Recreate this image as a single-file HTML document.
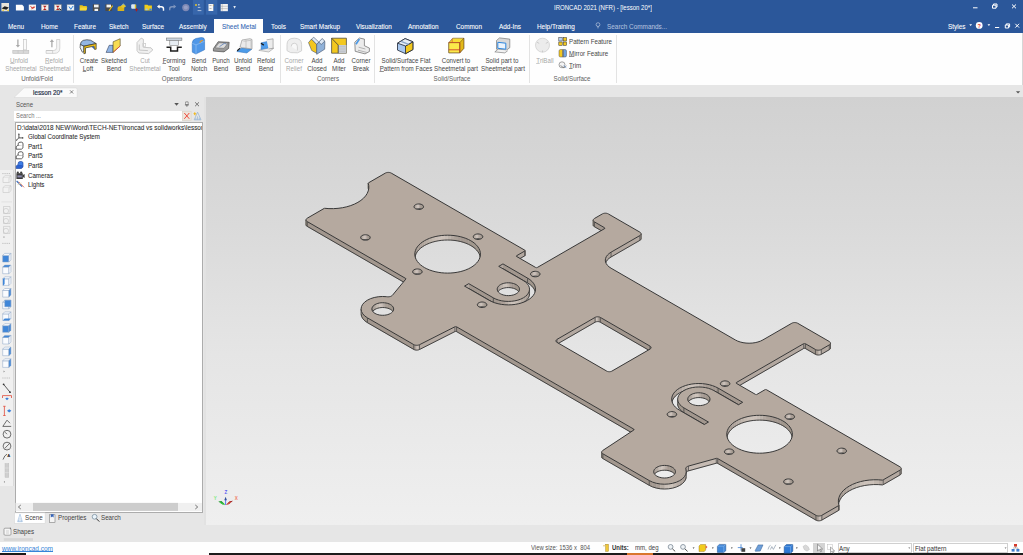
<!DOCTYPE html>
<html><head><meta charset="utf-8">
<style>
*{margin:0;padding:0;box-sizing:border-box}
html,body{width:1023px;height:555px;overflow:hidden;background:#e6e6e6;font-family:"Liberation Sans",sans-serif;font-size:6.2px;color:#444}
.a{position:absolute;white-space:nowrap;line-height:1}
svg{position:absolute;overflow:visible}
#top{position:absolute;left:0;top:0;width:1023px;height:33px;background:#2b579a}
.tab{position:absolute;top:22.7px;color:#fff;font-size:7.2px;line-height:1;white-space:nowrap;transform:scaleX(.89);transform-origin:0 0}
#ribbon{position:absolute;left:0;top:33px;width:1023px;height:52px;background:#fefefe;border-right:1px solid #d6d6d6}
.l{position:absolute;width:80px;text-align:center;font-size:7px;line-height:1;color:#474747;white-space:nowrap;transform:scaleX(.885)}
.d{color:#a8a8a8}
.g{position:absolute;width:80px;text-align:center;top:75.3px;font-size:7px;line-height:1;color:#606060;white-space:nowrap;transform:scaleX(.885)}
.sep{position:absolute;top:35px;width:1px;height:48px;background:#e3e3e3}
#doctabs{position:absolute;left:0;top:85px;width:1023px;height:12px;background:#e6e6e6}
#vp{position:absolute;left:206px;top:97px;width:817px;height:427.5px;background:linear-gradient(180deg,#d1d1d1 0%,#dadada 30%,#e5e5e5 60%,#efefef 100%)}
#status{position:absolute;left:0;top:542px;width:1023px;height:11px;background:#fefefe}
.tr{position:absolute;left:27.5px;font-size:7px;line-height:1;color:#2e2e2e;white-space:nowrap;transform:scaleX(.88);transform-origin:0 0}
u{text-decoration:none;background:linear-gradient(currentColor,currentColor) 0 93%/100% 0.6px no-repeat}
.tab,.tr{-webkit-text-stroke:0.08px currentColor}
</style></head><body>
<!-- ===== TOP BAR ===== -->
<div id="top"></div>
<svg style="left:0;top:0" width="240" height="16">
<!-- app icon -->
<rect x="1.4" y="3" width="7.6" height="8.3" fill="#e9e4da"/>
<path d="M1.6 8.5l3-2.2l4.3 1.2l-2.6 2.3z" fill="#1f1f1f"/>
<path d="M1.8 10.2l2-1.2v2.2z" fill="#e8c830"/>
<path d="M6.6 10.4l2.3-1v1.8z" fill="#e8c830"/>
<!-- new -->
<path d="M15.9 4.8h6.3l1.7 1.6v4.1h-8z" fill="#fdfdfd"/>
<!-- 3 -->
<rect x="28.8" y="4.6" width="7.2" height="5.8" fill="#f6f3f0"/>
<path d="M30.5 6.5l2.4 1.8l2.2-1.6M31.5 8.8l2.5-2" stroke="#d42a1c" stroke-width="1" fill="none"/>
<!-- 4 -->
<rect x="41.2" y="4.6" width="7.3" height="6" fill="#f3eeec" stroke="#8d7e72" stroke-width="0.4"/>
<path d="M43 5.8h3.6l-1.8 2.2l1.8 2.1h-3.6l1.8-2.1z" fill="#b8201a"/>
<!-- 5 -->
<rect x="54.2" y="4.6" width="7.2" height="6" fill="#f3eeec" stroke="#7d7e72" stroke-width="0.4"/>
<path d="M56 5.8h3.6l-1.8 2.2l1.8 2.1h-3.6l1.8-2.1z" fill="#b8201a"/>
<path d="M58.8 8.4l2.6 1.8" stroke="#222" stroke-width="1"/>
<!-- 6 -->
<rect x="67" y="4.6" width="7.1" height="6" fill="#eef3f8" stroke="#7d8a96" stroke-width="0.4"/>
<path d="M69 6.5l1.8 2.8l2.3-3.3" stroke="#2d7fd8" stroke-width="1" fill="none"/>
<!-- folder -->
<path d="M79.6 5.2h2.8l0.8 0.8h3.6v4.2h-7.2z" fill="#e6c21d"/>
<path d="M80.4 7.6h7l-1.4 2.8h-6.4z" fill="#f6d838"/>
<!-- save -->
<rect x="92.8" y="4.2" width="6.9" height="6.8" rx="0.5" fill="#4a4a4a"/>
<rect x="94" y="4.6" width="4.6" height="2.8" fill="#f2f2f2"/>
<rect x="94.5" y="8.8" width="3.6" height="2.2" fill="#f2f2f2"/>
<!-- save as -->
<rect x="105.4" y="4.2" width="6.8" height="6.8" rx="0.5" fill="#4a4a4a"/>
<rect x="106.5" y="4.6" width="4.5" height="2.8" fill="#f2f2f2"/>
<path d="M108.5 10.5l3.8-5.2l0.8 0.6l-3.6 5z" fill="#e8c21e"/>
<!-- 10 -->
<path d="M117.6 8.3q0-2.2 3.3-2.2t3.3 2.2v2.6h-6.6z" fill="#d9b41c"/>
<path d="M120.5 6.2l2.8-2.8l2.8 2.8l-2.8 2z" fill="#e4c62a"/>
<path d="M121.7 5.4l1.6-1.6l1.5 1.5" stroke="#66a4e0" stroke-width="0.8" fill="none"/>
<!-- 11 -->
<rect x="131.2" y="4.2" width="4.4" height="4.6" rx="1" fill="#dbe8f4"/>
<rect x="134.8" y="4.6" width="1.4" height="3.8" fill="#e0c022"/>
<path d="M136.5 8.2v3.2M134.9 9.8h3.2" stroke="#b01b1b" stroke-width="0.9"/>
<!-- folder 2 -->
<path d="M144.5 4.8h3l0.8 0.8h3.6v4.8h-7.4z" fill="#f0cc1a"/>
<rect x="145.6" y="8.6" width="2" height="1.6" fill="#9ec4ea"/>
<rect x="149.4" y="8.6" width="2.2" height="1.6" fill="#3b8be0"/>
<!-- undo -->
<path d="M157 6.6l2.6-2v1.4h1.8q2.8 0 2.8 2.6v2.2h-1.4v-1.8q0-1.6-1.6-1.6h-1.6v1.4z" fill="#fcfcfc"/>
<!-- redo -->
<path d="M176.2 6.6l-2.6-2v1.4h-1.8q-2.8 0-2.8 2.6v1.6h1.4v-1.2q0-1.6 1.6-1.6h1.6v1.4z" fill="#7d94bd"/>
<!-- dim circle -->
<circle cx="185.8" cy="7.6" r="3.6" fill="#7e89b5"/>
<circle cx="185.8" cy="7.6" r="2" fill="#96a0c6"/>
<!-- highlight boxes -->
<rect x="192.9" y="0" width="10.9" height="14.7" fill="#3766ab"/>
<rect x="206" y="0" width="11.3" height="14.7" fill="#3766ab"/>
<circle cx="196" cy="5" r="1" fill="#e4c32a"/>
<path d="M198.3 4.6h1.2M198.8 4.2v1.4M197.8 7.4h2.6M197.6 10.6h3.8" stroke="#dfe7f2" stroke-width="0.7"/>
<rect x="208.5" y="4" width="4.8" height="7" fill="#f6f6f6"/>
<path d="M209.5 5.5h2M209.5 8.5h2" stroke="#777" stroke-width="0.5"/>
<path d="M213.3 4.6v1.5" stroke="#e0a020" stroke-width="0.6"/>
<!-- grid -->
<rect x="220.7" y="4" width="7.2" height="7.2" fill="#f2f2f2"/>
<path d="M220.7 6.3h7.2M220.7 8.6h7.2M222.2 4v7.2" stroke="#8a8a8a" stroke-width="0.4"/>
<path d="M233.3 6.1h2.6l-1.3 2.6z" fill="#e6ecf4"/>
</svg>

<div class="a" style="left:554px;top:5px;font-size:6.9px;color:#fff;transform:scaleX(.875);transform-origin:0 0">IRONCAD 2021 (NFR) - [lesson 20*]</div>
<svg style="left:0;top:0" width="1023" height="33">
<g stroke="#fff" stroke-width="1" fill="none">
<path d="M973 7.8h4.5"/>
<path d="M992.5 5.2h3.5v3h-3.5z M993.5 5.2v-1.2h3.5v3h-1"/>
<path d="M1012 4.5l4 3.8M1016 4.5l-4 3.8"/>
<path d="M995 27.5h4.2"/>
<path d="M1005.3 25h3.3v3h-3.3z M1006.3 25v-1.1h3.3v3h-0.8"/>
<path d="M1015.3 23.8l3.8 3.8M1019.1 23.8l-3.8 3.8"/>
</g>
<path d="M969.3 24.3h2.8l-1.4 1.7z M987.5 24.3h2.8l-1.4 1.7z" fill="#fff"/>
<circle cx="979.2" cy="25.4" r="3.4" fill="#fff"/>
<text x="977.6" y="27.7" font-size="5.5" font-weight="bold" fill="#d9302a" font-family="Liberation Sans">?</text>
<circle cx="598" cy="24.6" r="1.9" stroke="#c9d4e6" stroke-width="0.6" fill="none"/><path d="M597.1 26.9h1.8M597.3 27.9h1.4" stroke="#c9d4e6" stroke-width="0.5"/>
</svg>
<div class="a" style="left:214px;top:19px;width:48.5px;height:14px;background:#fefefe"></div>
<div class="tab" style="left:7.6px">Menu</div>
<div class="tab" style="left:40.7px">Home</div>
<div class="tab" style="left:73.7px">Feature</div>
<div class="tab" style="left:108.8px">Sketch</div>
<div class="tab" style="left:142.3px">Surface</div>
<div class="tab" style="left:178.6px">Assembly</div>
<div class="tab" style="left:222px;color:#2f64b3">Sheet Metal</div>
<div class="tab" style="left:270.6px">Tools</div>
<div class="tab" style="left:300.4px">Smart Markup</div>
<div class="tab" style="left:356.3px">Visualization</div>
<div class="tab" style="left:407.6px">Annotation</div>
<div class="tab" style="left:455.8px">Common</div>
<div class="tab" style="left:499px">Add-Ins</div>
<div class="tab" style="left:537.1px">Help/Training</div>
<div class="tab" style="left:607.2px;color:#aebfdc">Search Commands...</div>
<div class="tab" style="left:948px">Styles</div>
<!-- ===== RIBBON ===== -->
<div id="ribbon"></div>
<div class="sep" style="left:73px"></div>
<div class="sep" style="left:279.5px"></div>
<div class="sep" style="left:374px"></div>
<div class="sep" style="left:528.5px"></div>
<div class="sep" style="left:615.5px"></div>
<svg style="left:0;top:33px" width="640" height="52" viewBox="0 33 640 52">
<!-- Unfold Sheetmetal (disabled) -->
<g fill="#d4d4d4" stroke="#bdbdbd" stroke-width="0.6">
<path d="M17.9 39.5v5.8" stroke="#a9a9a9" stroke-width="1.3" fill="none"/>
<path d="M15.8 45h4.2l-2.1 2.6z" fill="#a9a9a9" stroke="none"/>
<rect x="23.3" y="39.5" width="3.2" height="10.4" fill="#fafafa"/>
<rect x="12.8" y="50.4" width="16" height="2.9" fill="#d8d8d8"/>
<path d="M18.1 50.4v2.9M23.4 50.4v2.9" fill="none"/>
</g>
<!-- Refold Sheetmetal (disabled) -->
<g fill="#d4d4d4" stroke="#bdbdbd" stroke-width="0.6">
<path d="M51.9 41.5v5.8" stroke="#a9a9a9" stroke-width="1.3" fill="none"/>
<path d="M49.8 41.9h4.2l-2.1-2.6z" fill="#a9a9a9" stroke="none"/>
<path d="M56.6 39.5h3.2v8.5q0 5.4-5.4 5.4h-8.3v-2.9h7.6q2.9 0 2.9-2.9z" fill="#f4f4f4"/>
<path d="M46.2 50.5h6.4v2.9" fill="none"/>
</g>
<!-- Create Loft -->
<g stroke="#1f1f1f" stroke-width="0.6" stroke-linejoin="round">
<path d="M80.3 44.6q0.3-3.2 2.8-4.2q3.5-1.2 7.5-0.2l5.6 3.4l-12.3 2.6z" fill="#93b6e4"/>
<path d="M80.3 44.6l3.6 1.6v5.6l-1.6 0.4l-2.2-4.6z" fill="#e6f0fa"/>
<path d="M83.9 46.2l12.3-2.6v5.6l-1.6 0.2l-0.6-3.2l-8.5 1.7v5.4l-1.6 0.5z" fill="#f0c21a"/>
<path d="M94 46.2l-2.6 0.6l3.2 2.6z" fill="#3a66a8" stroke="none"/>
</g>
<!-- Sketched Bend -->
<path d="M106.1 52.4l3.1-7.1h3.9v7.1z" fill="#92b6e6" stroke="#2a3550" stroke-width="0.55" stroke-linejoin="round"/>
<path d="M113.1 41.8l7.1-3.1v7.3l-7.1 6.4z" fill="#f7dc52" stroke="#3b3520" stroke-width="0.55" stroke-linejoin="round"/>
<path d="M113.3 52.2l6.9-6.2" stroke="#ee4035" stroke-width="0.7"/>
<!-- Cut Sheetmetal (disabled) -->
<g fill="#f0f0f0" stroke="#bdbdbd" stroke-width="0.8">
<path d="M137 42.5l4.2-4.4l2.2 1.2v8l7.6 0.5l1.8 2.2l-4.2 3.6l-9.8-0.6l-1.8-2.4z"/>
<path d="M139.3 44.5v5.6l8.6 0.5" fill="none"/>
<rect x="142.8" y="43.5" width="2.8" height="2.8" fill="none" stroke="#cfcfcf"/>
</g>
<!-- Forming Tool -->
<g>
<rect x="166.3" y="38" width="15.6" height="2.4" fill="#c9d3de" stroke="#6d6d6d" stroke-width="0.5"/>
<rect x="169.8" y="40.4" width="8.6" height="5" fill="#e7edf3" stroke="#6d6d6d" stroke-width="0.5"/>
<path d="M166.5 47.3h4.2v3.7h6.8v-3.7h4.3" fill="none" stroke="#1e1e1e" stroke-width="1.5"/>
</g>
<!-- Bend Notch -->
<path d="M192.2 43.3q0-3.6 3.6-4.8l5.4-1q3.2-0.3 3.4 2.4v9.8l-8.7 4.3l-3.6-1.8z" fill="#4f97e8" stroke="#2d6cb8" stroke-width="0.5"/>
<path d="M192.2 43.3l3.8 1.6l8.5-3.6M196 44.9v9.4" fill="none" stroke="#9cc8f5" stroke-width="0.6"/>
<path d="M199.8 42.6q1-2.2 3-2.3" fill="none" stroke="#e99a26" stroke-width="1.3"/>
<!-- Punch Bend -->
<path d="M213.4 48.6l4.8-6.9l11 0.6l-0.6 6.2l-4.6 3.4l-10.6-0.8z" fill="#9a9a9a" stroke="#3a3a3a" stroke-width="0.6"/>
<path d="M215.2 47.8l3.8-5l8.8 0.5l-3.8 5z" fill="#dcdcdc" stroke="#555" stroke-width="0.4"/>
<path d="M219.5 46.6l5.3-3.6l1.5 1.6" fill="none" stroke="#5a7fb8" stroke-width="0.8"/>
<!-- Unfold Bend -->
<path d="M236.8 51.5l5-3.5l10 1.2l-5 3.8z" fill="#4c9be8" stroke="#2f6cb4" stroke-width="0.5"/>
<path d="M240 47l2-7l8-1.3l2 0.8v9.4l-9.5-1.2z" fill="#eaeaea" stroke="#8a8a8a" stroke-width="0.6"/>
<path d="M243.5 41.3l7.5-1v7.5M246 40.3v7.8" fill="none" stroke="#a5a5a5" stroke-width="0.5"/>
<path d="M237.2 50.7l3-2.6" stroke="#1a1a1a" stroke-width="1.2"/>
<!-- Refold Bend -->
<path d="M258.8 50.4l5.4-3.5l9.6 1.3l-5 3.8z" fill="#e8e8e8" stroke="#8a8a8a" stroke-width="0.5"/>
<path d="M261.2 42.8l7.3-1.6v6.8l-7.3 1.6z" fill="#4d9ceb" stroke="#2f6cb4" stroke-width="0.5"/>
<path d="M266.6 39.8l6.5-1v9.5l-4.6 0.6" fill="#ececec" stroke="#8a8a8a" stroke-width="0.6"/>
<path d="M261 43.3l2.8 1.8" stroke="#1a1a1a" stroke-width="1.3"/>
<!-- Corner Relief (disabled) -->
<g fill="#eeeeee" stroke="#c9c9c9" stroke-width="0.8">
<path d="M287 44.5q0-6.3 7.3-6.3t7.3 6.3v6.3l-4 2l-7-0.2l-3.6-2z"/>
<path d="M291.2 46.5q0-3.3 3.1-3.3t3.1 3.3v4" fill="#f8f8f8"/>
</g>
<!-- Add Closed -->
<g stroke="#3a4a62" stroke-width="0.55" stroke-linejoin="round">
<path d="M308.5 42.6l3-3.5l5.2 5.2v9l-5-2.8z" fill="#f3c61f"/>
<path d="M316.7 44.3l5.5-5.3l2.7 2.6l-0.2 7.6l-8 5.1z" fill="#8fb1d9"/>
<path d="M311.5 39.1l2.3-1.8l5 4.7l-2.1 2.3z" fill="#dde8f5"/>
<path d="M318.8 42l3.4-3.5l2.5 2.6l-3.4 3.4z" fill="#dde8f5"/>
</g>
<!-- Add Miter -->
<path d="M331.6 38.2h14.8v15h-14.8z" fill="#f3c81e" stroke="#3a3a3a" stroke-width="0.7"/>
<path d="M338.2 45l8.2 0v8.2h-8.2z" fill="#c8ccd2"/>
<path d="M331.6 38.2l6.6 6.8v8.2" fill="none" stroke="#3a3a3a" stroke-width="0.8"/>
<path d="M339.2 46.5h6M339.2 49h6M339.2 51.5h6" stroke="#b0b5bc" stroke-width="0.4"/>
<!-- Corner Break -->
<path d="M354.8 42.2l4.6-4.2l5 1.1v6.6l5 2.4v3.4l-4.4 2.4l-9.8-2.6z" fill="#ececec" stroke="#4f4f4f" stroke-width="0.6"/>
<path d="M356 44.3l3.4-5.3" stroke="#4a98e6" stroke-width="1.6"/>
<path d="M358.6 47.2l6.8 1.8M358 50.2l8.6 2.2" fill="none" stroke="#7a7a7a" stroke-width="0.5"/>
<!-- Solid/Surface Flat Pattern -->
<g stroke="#1d2433" stroke-width="0.8" stroke-linejoin="round">
<path d="M397.5 43.2l7.6-4.6l7.8 3.2v7.8l-7.4 4.1l-8-3.6z" fill="#a9c8ef"/>
<path d="M405.5 46l7.4-4.2v7.8l-7.4 4.1z" fill="#f3c81e"/>
<path d="M397.5 43.2l8 2.8l7.4-4.2l-7.8-3.2z" fill="#e6edf5"/>
<path d="M401 41.3l7.6 3" fill="none" stroke="#8aa6c8" stroke-width="1.4"/>
</g>
<!-- Convert to Sheetmetal -->
<g stroke="#5a3b1a" stroke-width="0.5">
<path d="M448.8 42.6l4-4.4h11v10.2l-4 4.4h-11z" fill="#f7dd33"/>
<path d="M448.8 42.6h11v10.2h-11z" fill="#fbe94a"/>
<path d="M459.8 42.6l4-4.4v10.2l-4 4.4z" fill="#e2b91a"/>
<path d="M448.8 49.8h11" stroke="#c9302c" stroke-width="0.8"/>
<path d="M448.8 42.6h11v10.2" fill="none" stroke="#c9302c" stroke-width="0.6"/>
<path d="M452.2 38.6v3.5" stroke="#d13a2e" stroke-width="0.6"/>
</g>
<!-- Solid part to Sheetmetal -->
<path d="M496.5 40.5l3-2.6l10.3 1.2v8.6l-3.5 2.5l-9.8-1z" fill="#d9d9d9" stroke="#5a5a5a" stroke-width="0.55"/>
<path d="M497.8 42.3l8 0.9v6l-8-0.9z" fill="#eaf3fc" stroke="#2d86de" stroke-width="1"/>
<path d="M497.8 49.5l-3 2.4l10 1l3-2.2" fill="#f2f2f2" stroke="#555" stroke-width="0.5"/>
<!-- TriBall (disabled) -->
<circle cx="542.5" cy="45.2" r="7" fill="#ececec" stroke="#cdcdcd" stroke-width="0.7"/>
<path d="M537 42.2l2.2 1.2M548 42.2l-2.2 1.2M542.5 50.5v1.7" stroke="#c4c4c4" stroke-width="0.8"/>
<!-- Pattern Feature icon -->
<g stroke="#2f2f2f" stroke-width="0.5">
<rect x="558.8" y="37.6" width="3.4" height="3.4" fill="#b8d0ee"/>
<rect x="563.2" y="37.6" width="3.4" height="3.4" fill="#f3c81e"/>
<rect x="558.8" y="42" width="3.4" height="3.4" fill="#f3c81e"/>
<rect x="563.2" y="42" width="3.4" height="3.4" fill="#f3c81e"/>
</g>
<!-- Mirror Feature icon -->
<path d="M559 51q0-1.5 1.5-1.5h2v7.5h-2q-1.5 0-1.5-1.5z" fill="#f3c81e" stroke="#4a4a4a" stroke-width="0.45"/>
<path d="M566.5 51q0-1.5-1.5-1.5h-1.5v7.5h1.5q1.5 0 1.5-1.5z" fill="#6ea2e0" stroke="#4a4a4a" stroke-width="0.45"/>
<path d="M563 49v8.6" stroke="#3a3a3a" stroke-width="0.5"/>
<!-- Trim icon -->
<circle cx="562" cy="64.8" r="3" fill="#f4f4f4" stroke="#6a6a6a" stroke-width="0.6"/>
<path d="M560.5 65.5l3.5 2.5l2.5-2.2" fill="none" stroke="#555" stroke-width="0.6"/>
<path d="M563.8 65.3l2.5 2.8" stroke="#4a8ad8" stroke-width="0.6"/>
</svg>
<!-- labels -->
<div class="l d" style="left:-21.5px;top:57.3px"><u>U</u>nfold</div>
<div class="l d" style="left:-19.5px;top:65.3px">Sheetmetal</div>
<div class="l d" style="left:14.3px;top:57.3px"><u>R</u>efold</div>
<div class="l d" style="left:14.5px;top:65.3px">Sheetmetal</div>
<div class="g" style="left:-2.6px">Unfold/Fold</div>
<div class="l" style="left:48.7px;top:57.3px">Create</div>
<div class="l" style="left:48.3px;top:65.3px"><u>L</u>oft</div>
<div class="l" style="left:73.5px;top:57.3px">Sketched</div>
<div class="l" style="left:73.8px;top:65.3px">Bend</div>
<div class="l d" style="left:104.9px;top:57.3px">Cut</div>
<div class="l d" style="left:105px;top:65.3px">Sheetmetal</div>
<div class="l" style="left:134.4px;top:57.3px"><u>F</u>orming</div>
<div class="l" style="left:134.2px;top:65.3px">Tool</div>
<div class="l" style="left:158.5px;top:57.3px">Bend</div>
<div class="l" style="left:158.6px;top:65.3px">Notch</div>
<div class="l" style="left:181.2px;top:57.3px">Punch</div>
<div class="l" style="left:180.8px;top:65.3px">Bend</div>
<div class="l" style="left:203.4px;top:57.3px">Unfold</div>
<div class="l" style="left:202.9px;top:65.3px">Bend</div>
<div class="l" style="left:226px;top:57.3px">Refold</div>
<div class="l" style="left:225.7px;top:65.3px">Bend</div>
<div class="g" style="left:137.2px">Operations</div>
<div class="l d" style="left:254.2px;top:57.3px">Corner</div>
<div class="l d" style="left:254.2px;top:65.3px">Relief</div>
<div class="l" style="left:276.5px;top:57.3px">Add</div>
<div class="l" style="left:276.7px;top:65.3px">Closed</div>
<div class="l" style="left:299px;top:57.3px">Add</div>
<div class="l" style="left:299.3px;top:65.3px">Miter</div>
<div class="l" style="left:321.4px;top:57.3px">Corner</div>
<div class="l" style="left:321.3px;top:65.3px">Break</div>
<div class="g" style="left:287.7px">Corners</div>
<div class="l" style="left:365.5px;top:57.3px">Solid/Surface Flat</div>
<div class="l" style="left:365.8px;top:65.3px"><u>P</u>attern from Faces</div>
<div class="l" style="left:416.3px;top:57.3px">Convert to</div>
<div class="l" style="left:416.3px;top:65.3px">Sheetmetal part</div>
<div class="l" style="left:462.4px;top:57.3px">Solid part to</div>
<div class="l" style="left:462.7px;top:65.3px">Sheetmetal part</div>
<div class="g" style="left:411.8px">Solid/Surface</div>
<div class="l d" style="left:504.5px;top:57.3px"><u>T</u>riBall</div>
<div class="a" style="left:568.7px;top:38.3px;font-size:7px;color:#474747;transform:scaleX(.885);transform-origin:0 0">Pattern Feature</div>
<div class="a" style="left:568.7px;top:50px;font-size:7px;color:#474747;transform:scaleX(.885);transform-origin:0 0"><u>M</u>irror Feature</div>
<div class="a" style="left:568.7px;top:61.7px;font-size:7px;color:#474747;transform:scaleX(.885);transform-origin:0 0"><u>T</u>rim</div>
<div class="g" style="left:532.2px">Solid/Surface</div>

<!-- ===== DOC TABS ===== -->
<div id="doctabs"></div>
<svg style="left:0;top:85px" width="1023" height="13" viewBox="0 85 1023 13">
<path d="M14 97.5L24 87.9H75.6q1.6 0 1.6 1.6V97.5z" fill="#fafafa" stroke="#d8d8d8" stroke-width="0.6"/>
<path d="M70 90.3l3.2 3.2M73.2 90.3l-3.2 3.2" stroke="#555" stroke-width="0.7"/>
<path d="M1015.9 91.3h4.3l-2.15 2.2z" fill="#555"/>
</svg>
<div class="a" style="left:32.7px;top:88.6px;font-size:7px;color:#27324a;transform:scaleX(.9);transform-origin:0 0;-webkit-text-stroke:0.2px #27324a">lesson 20*</div>

<!-- ===== LEFT ===== -->
<div class="a" style="left:0;top:169.8px;width:13.5px;height:316px;background:#f0f0f0;border-right:1px solid #dadada"></div>
<div class="a" style="left:204px;top:97px;width:2px;height:427.5px;background:#e2e2e2"></div>
<div class="a" style="left:16px;top:100.8px;font-size:7px;color:#555;transform:scaleX(.86);transform-origin:0 0">Scene</div>
<div class="a" style="left:14.2px;top:110.7px;width:168px;height:10px;background:#fff"></div>
<div class="a" style="left:16px;top:112.3px;font-size:7px;color:#777;transform:scaleX(.83);transform-origin:0 0">Search ...</div>
<div class="a" style="left:14.5px;top:121.5px;width:188.5px;height:391.5px;background:#fff;border:1px solid #acacac"></div>
<svg style="left:0;top:97px" width="210" height="445" viewBox="0 97 210 445">
<!-- header icons -->
<path d="M174.3 103h4.5l-2.25 2.8z" fill="#555"/>
<path d="M185.7 101.9h2.4v2.9h-2.4z" fill="#fff" stroke="#555" stroke-width="0.6"/><path d="M184.9 104.9h4M186.9 104.9v1.9" stroke="#555" stroke-width="0.7" fill="none"/>
<path d="M195.1 102.3l3.9 3.9M199 102.3l-3.9 3.9" stroke="#555" stroke-width="0.8"/>
<!-- search buttons -->
<rect x="182.5" y="111.2" width="8.6" height="9.4" fill="#eee6dc" stroke="#d8cfc3" stroke-width="0.5"/>
<path d="M184.3 113l5 5.8M189.3 113l-5 5.8" stroke="#ee4b3c" stroke-width="1"/>
<path d="M197.6 112.2l-3.4 7.6h6.8z M197.6 116.3v3.5M195.9 119.8v-2M199.3 119.8v-2" stroke="#8fb0d3" stroke-width="0.7" fill="none"/>
<path d="M193.4 113.6l1.6-1.6l0.5 1.2l1.2 0.3l-1.4 0.9l0.2 1.3l-1-0.8" fill="#f0b820"/>
<!-- tree icons -->
<path d="M18.9 134.2v3.7M18.9 137.9l-2.3 2.1M18.9 137.9h3.6" stroke="#1e1e1e" stroke-width="0.75" fill="none"/>
<path d="M18 134.6l0.9-1.4l0.9 1.4z M22.2 137l1.6 0.9l-1.6 0.9z" fill="#1e1e1e"/>
<circle cx="16.6" cy="140" r="0.6" fill="#1e1e1e"/>
<g stroke="#1e1e1e" stroke-width="0.7" stroke-linejoin="round">
<path d="M16.2 146.6l1.6-1.2h4.4l0.8 0.8v1.6l-1.6 1.4h-5.2z" fill="#fff"/>
<path d="M18.2 145.4v-1.6q0-1.4 1.8-1.6h1.6q1.4 0.2 1.4 1.6v2.2" fill="#fff"/>
<path d="M16.2 156.2l1.6-1.2h4.4l0.8 0.8v1.6l-1.6 1.4h-5.2z" fill="#fff"/>
<path d="M18.2 155v-1.6q0-1.4 1.8-1.6h1.6q1.4 0.2 1.4 1.6v2.2" fill="#fff"/>
</g>
<g stroke="#1a3f9a" stroke-width="0.6" stroke-linejoin="round">
<path d="M16.2 165.9l1.6-1.2h4.4l0.8 0.8v1.6l-1.6 1.4h-5.2z" fill="#2a62d0"/>
<path d="M18.2 164.7v-1.6q0-1.4 1.8-1.6h1.6q1.4 0.2 1.4 1.6v2.2" fill="#3f7ee6"/>
</g>
<rect x="16.4" y="173.2" width="6.4" height="5.8" fill="#3c3c3c"/>
<circle cx="17.8" cy="172.6" r="1.1" fill="#3c3c3c"/><circle cx="21.2" cy="172.6" r="1.1" fill="#3c3c3c"/>
<path d="M22.8 175l1.8-1v4l-1.8-1z" fill="#3c3c3c"/>
<rect x="17.4" y="175.4" width="4.4" height="2" fill="#8d8bb0"/>
<path d="M16.6 181l5.5 5.6" stroke="#3a6fc0" stroke-width="1.2"/>
<path d="M18.6 181.8l5.5 5.6" stroke="#e05a3a" stroke-width="0.8"/>
<path d="M17.6 184.6l3.8-1.6" stroke="#e9d9b0" stroke-width="1"/>
<!-- scrollbar -->
<rect x="15.5" y="502.9" width="186.5" height="8.2" fill="#f0f0f0"/>
<rect x="33" y="502.9" width="145" height="8" fill="#cdcdcd"/>
<path d="M20.8 505l-2.4 2l2.4 2M195.3 505l2.4 2l-2.4 2" stroke="#555" stroke-width="0.8" fill="none"/>
<!-- bottom tabs -->
<rect x="14.6" y="512.9" width="30.5" height="10.4" fill="#fff" stroke="#d4d4d4" stroke-width="0.5"/>
<path d="M20 514.2l-2.4 7.5h4.8z M20 517.8v3.9M18.6 521.7v-1.8M21.4 521.7v-1.8" stroke="#89aed8" stroke-width="0.55" fill="none"/>
<rect x="49.4" y="514.8" width="5.6" height="7.8" fill="#f4f4f4" stroke="#666" stroke-width="0.5"/>
<path d="M50.8 514.3h2.8v3.2l-1.4-1l-1.4 1z" fill="#3463b8"/>
<circle cx="94.6" cy="516.8" r="2.4" fill="#eaf4fb" stroke="#6d8598" stroke-width="0.7"/>
<path d="M96.3 518.6l3 3" stroke="#333" stroke-width="1"/>
<!-- shapes -->
<rect x="4" y="528.2" width="7" height="7" rx="1" fill="#f6f6f6" stroke="#777" stroke-width="0.6"/>
<path d="M6 531h3M6 533h3" stroke="#aaa" stroke-width="0.5"/>
<path d="M10.4 527.6v1.8" stroke="#555" stroke-width="0.6"/>
<rect x="3.8" y="538.1" width="29.2" height="2.8" fill="#d6d6d6"/>
</svg>
<div class="a" style="left:15.5px;top:122.5px;width:186.5px;height:9px;overflow:hidden"><div class="tr" style="top:1.8px;left:1.1px;transform:scaleX(.915)">D:\data\2018 NEW\Word\TECH-NET\ironcad vs solidworks\lesson</div></div>
<div class="tr" style="top:133.4px">Global Coordinate System</div>
<div class="tr" style="top:142.5px">Part1</div>
<div class="tr" style="top:152.2px">Part5</div>
<div class="tr" style="top:161.9px">Part8</div>
<div class="tr" style="top:171.7px">Cameras</div>
<div class="tr" style="top:180.8px">Lights</div>
<div class="a" style="left:25.4px;top:514.4px;font-size:7px;color:#444;transform:scaleX(.89);transform-origin:0 0">Scene</div>
<div class="a" style="left:57.8px;top:514.4px;font-size:7px;color:#444;transform:scaleX(.89);transform-origin:0 0">Properties</div>
<div class="a" style="left:101.3px;top:514.4px;font-size:7px;color:#444;transform:scaleX(.89);transform-origin:0 0">Search</div>
<div class="a" style="left:13.3px;top:528px;font-size:7px;color:#444;transform:scaleX(.89);transform-origin:0 0">Shapes</div>
<!--STRIP-->
<svg style="left:0;top:165px" width="14" height="325" viewBox="0 165 14 325">
<path d="M2.5 173.6h0.9M4.6 173.6h0.9M6.7 173.6h0.9M8.8 173.6h0.9" stroke="#9a9a9a" stroke-width="0.8"/>
<g fill="#f2f2f2" stroke="#c8c8c8" stroke-width="0.6"><path d="M3 177.5h6v5h-6z"/><path d="M3 177.5l2-1.8h6l-2 1.8M9 182.5l2-1.8v-5"/></g>
<g fill="#f2f2f2" stroke="#c8c8c8" stroke-width="0.6"><path d="M3 187.5h6v5h-6z"/><path d="M3 187.5l2-1.8h6l-2 1.8M9 192.5l2-1.8v-5"/></g>
<path d="M1.5 201.9h10.5" stroke="#d6d6d6" stroke-width="0.6"/>
<g fill="none" stroke="#c4c4c4" stroke-width="0.6"><path d="M3.5 206.5h6.5v7h-6.5z"/><circle cx="6" cy="211.0" r="2.6"/></g>
<g fill="none" stroke="#c4c4c4" stroke-width="0.6"><path d="M3.5 216.5h6.5v7h-6.5z"/><circle cx="6" cy="221.0" r="2.6"/></g>
<g fill="none" stroke="#c4c4c4" stroke-width="0.6"><path d="M3.5 226.4h6.5v7h-6.5z"/><circle cx="6" cy="230.9" r="2.6"/></g>
<path d="M3.6 236.2l1.2 0.9l-1.2 0.9z" fill="#777"/>
<path d="M2.5 243.4h0.9M4.6 243.4h0.9M6.7 243.4h0.9M8.8 243.4h0.9" stroke="#9a9a9a" stroke-width="0.8"/>
<g stroke="#8aa4c4" stroke-width="0.5" stroke-linejoin="round"><path d="M2.7 255.39999999999998h6.2v6.6h-6.2z" fill="#3f86d8"/><path d="M2.7 255.39999999999998l2-2h6.2l-2 2z" fill="#fafcff"/><path d="M8.9 255.39999999999998l2-2v6.6l-2 2z" fill="#fafcff"/></g>
<g stroke="#8aa4c4" stroke-width="0.5" stroke-linejoin="round"><path d="M2.7 267.09999999999997h6.2v6.6h-6.2z" fill="#fafcff"/><path d="M2.7 267.09999999999997l2-2h6.2l-2 2z" fill="#3f86d8"/><path d="M8.9 267.09999999999997l2-2v6.6l-2 2z" fill="#fafcff"/></g>
<g stroke="#8aa4c4" stroke-width="0.5" stroke-linejoin="round"><path d="M2.7 278.8h6.2v6.6h-6.2z" fill="#fafcff"/><path d="M2.7 278.8l2-2h6.2l-2 2z" fill="#fafcff"/><path d="M8.9 278.8l2-2v6.6l-2 2z" fill="#fafcff"/></g>
<path d="M3.0 279.1l1.6-1.6v6.6l-1.6 1.6z" fill="#3f86d8"/>
<g stroke="#8aa4c4" stroke-width="0.5" stroke-linejoin="round"><path d="M2.7 290.5h6.2v6.6h-6.2z" fill="#fafcff"/><path d="M2.7 290.5l2-2h6.2l-2 2z" fill="#fafcff"/><path d="M8.9 290.5l2-2v6.6l-2 2z" fill="#3f86d8"/></g>
<g stroke="#8aa4c4" stroke-width="0.5" stroke-linejoin="round"><path d="M2.7 302.2h6.2v6.6h-6.2z" fill="#fafcff"/><path d="M2.7 302.2l2-2h6.2l-2 2z" fill="#fafcff"/><path d="M8.9 302.2l2-2v6.6l-2 2z" fill="#fafcff"/></g>
<path d="M4.7 300.2h6.2v6.6h-6.2z" fill="#3f86d8" stroke="#8aa4c4" stroke-width="0.4"/>
<g stroke="#8aa4c4" stroke-width="0.5" stroke-linejoin="round"><path d="M2.7 313.9h6.2v6.6h-6.2z" fill="#fafcff"/><path d="M2.7 313.9l2-2h6.2l-2 2z" fill="#fafcff"/><path d="M8.9 313.9l2-2v6.6l-2 2z" fill="#fafcff"/></g>
<path d="M2.7 320.5l2-2h6.2l-2 2z" fill="#3f86d8"/>
<g stroke="#8aa4c4" stroke-width="0.5" stroke-linejoin="round"><path d="M2.7 325.7h6.2v6.6h-6.2z" fill="#3f86d8"/><path d="M2.7 325.7l2-2h6.2l-2 2z" fill="#fafcff"/><path d="M8.9 325.7l2-2v6.6l-2 2z" fill="#3f86d8"/></g>
<g stroke="#8aa4c4" stroke-width="0.5" stroke-linejoin="round"><path d="M2.7 337.4h6.2v6.6h-6.2z" fill="#fafcff"/><path d="M2.7 337.4l2-2h6.2l-2 2z" fill="#3f86d8"/><path d="M8.9 337.4l2-2v6.6l-2 2z" fill="#fafcff"/></g>
<g stroke="#8aa4c4" stroke-width="0.5" stroke-linejoin="round"><path d="M2.7 349.09999999999997h6.2v6.6h-6.2z" fill="#fafcff"/><path d="M2.7 349.09999999999997l2-2h6.2l-2 2z" fill="#fafcff"/><path d="M8.9 349.09999999999997l2-2v6.6l-2 2z" fill="#3f86d8"/></g>
<g stroke="#8aa4c4" stroke-width="0.5" stroke-linejoin="round"><path d="M2.7 360.8h6.2v6.6h-6.2z" fill="#fafcff"/><path d="M2.7 360.8l2-2h6.2l-2 2z" fill="#fafcff"/><path d="M8.9 360.8l2-2v6.6l-2 2z" fill="#3f86d8"/></g>
<path d="M3.6 370.6l1.2 0.9l-1.2 0.9z" fill="#777"/>
<path d="M2.5 378h0.9M4.6 378h0.9M6.7 378h0.9M8.8 378h0.9" stroke="#9a9a9a" stroke-width="0.8"/>
<path d="M3.5 384.2l6.5 8" stroke="#333" stroke-width="0.8"/><circle cx="3.6" cy="384.3" r="0.9" fill="#333"/><circle cx="10" cy="392.2" r="0.9" fill="#333"/>
<path d="M2.5 395.6h9M2.5 395.6v2.4M11.5 395.6v2.4" stroke="#e04a3a" stroke-width="0.8" fill="none"/><path d="M5.2 398.6l1.8-1.2l1.8 1.2l-1.8 1.6z" fill="#3c7fd8"/>
<path d="M3.2 406.3h2.4M4.4 406.3v9.2M3.2 415.5h2.4" stroke="#e04a3a" stroke-width="0.8"/><path d="M7 410.8l2.2-1.6l2.2 1.6l-2.2 1.8z" fill="#3c7fd8"/>
<path d="M2.8 426.4h8.4M2.8 426.4l4.2-6.2l3 3" stroke="#333" stroke-width="0.7" fill="none"/>
<circle cx="7" cy="434.2" r="3.9" fill="none" stroke="#333" stroke-width="0.7"/><path d="M5 432.2l2 2" stroke="#333" stroke-width="0.7"/>
<circle cx="7" cy="446.1" r="3.9" fill="none" stroke="#333" stroke-width="0.7"/><path d="M4.4 448.7l5.2-5.2" stroke="#333" stroke-width="0.7"/>
<path d="M1.5 448.2h10.5" stroke="#d6d6d6" stroke-width="0.5"/>
<path d="M3 459.6q1.6-4.6 4-5.4" stroke="#333" stroke-width="0.7" fill="none"/><text x="7.2" y="456.6" font-size="4.2" font-weight="bold" fill="#222" font-family="Liberation Sans">A</text>
<rect x="5" y="463.6" width="3.8" height="13.8" fill="#cfcfcf" stroke="#b8b8b8" stroke-width="0.4"/><path d="M5 468h3.8M5 472.6h3.8" stroke="#e6e6e6" stroke-width="0.5"/>
<path d="M4.9 481l-1.2 0.9l1.2 0.9z" fill="#777"/>
</svg>

<!-- ===== VIEWPORT ===== -->
<div id="vp">
<svg width="817" height="428" viewBox="206 97 817 428" style="left:0;top:0">
<path fill="#a2978e" stroke="#a2978e" stroke-width="0.45" d="M307.25,221.60L306.82,221.31L306.82,226.11L307.25,226.40ZM306.82,221.31L306.48,220.99L306.48,225.79L306.82,226.11ZM306.48,220.99L306.23,220.64L306.23,225.44L306.48,225.79ZM306.23,220.64L306.08,220.28L306.08,225.08L306.23,225.44ZM306.08,220.28L306.03,219.90L306.03,224.70L306.08,225.08ZM368.76,185.63L368.25,183.37L368.25,188.17L368.76,190.43ZM368.25,183.37L368.24,183.26L368.24,188.06L368.25,188.17ZM604.82,228.20L604.81,228.09L604.81,232.89L604.82,233.00ZM604.81,228.09L604.76,227.98L604.76,232.78L604.81,232.89ZM604.76,227.98L604.69,227.88L604.69,232.68L604.76,232.78ZM604.69,227.88L604.59,227.78L604.59,232.58L604.69,232.68ZM604.59,227.78L604.47,227.70L604.47,232.50L604.59,232.58ZM604.47,227.70L594.42,221.90L594.42,226.70L604.47,232.50ZM594.42,221.90L594.00,221.61L594.00,226.41L594.42,226.70ZM594.00,221.61L593.65,221.29L593.65,226.09L594.00,226.41ZM593.65,221.29L593.40,220.94L593.40,225.74L593.65,226.09ZM593.40,220.94L593.25,220.58L593.25,225.38L593.40,225.74ZM593.25,220.58L593.20,220.20L593.20,225.00L593.25,225.38ZM815.93,349.75L815.43,349.50L815.43,354.30L815.93,354.55ZM815.43,349.50L805.38,343.70L805.38,348.50L815.43,354.30ZM805.38,343.70L805.24,343.63L805.24,348.43L805.38,348.50ZM816.45,515.55L815.95,515.30L815.95,520.10L816.45,520.35ZM815.95,515.30L717.66,458.55L717.66,463.35L815.95,520.10ZM717.66,458.55L717.52,458.48L717.52,463.28L717.66,463.35ZM652.50,482.10L649.24,480.55L649.24,485.35L652.50,486.90ZM649.24,480.55L602.89,453.79L602.89,458.59L649.24,485.35ZM602.89,453.79L602.48,453.52L602.48,458.32L602.89,458.59ZM602.48,453.52L602.15,453.21L602.15,458.01L602.48,458.32ZM602.15,453.21L601.90,452.88L601.90,457.68L602.15,458.01ZM601.90,452.88L601.74,452.53L601.74,457.33L601.90,457.68ZM601.74,452.53L601.68,452.17L601.68,456.97L601.74,457.33ZM634.06,429.56L634.04,429.45L634.04,434.25L634.06,434.36ZM634.04,429.45L634.00,429.35L634.00,434.15L634.04,434.25ZM634.00,429.35L633.92,429.25L633.92,434.05L634.00,434.15ZM633.92,429.25L633.83,429.16L633.83,433.96L633.92,434.05ZM633.83,429.16L633.71,429.08L633.71,433.88L633.83,433.96ZM633.71,429.08L456.58,326.82L456.58,331.62L633.71,433.88ZM456.58,326.82L456.44,326.75L456.44,331.55L456.58,331.62ZM414.26,344.84L413.78,344.61L413.78,349.41L414.26,349.64ZM413.78,344.61L367.43,317.85L367.43,322.65L413.78,349.41ZM367.43,317.85L364.75,315.97L364.75,320.77L367.43,322.65ZM364.75,315.97L362.76,313.82L362.76,318.62L364.75,320.77ZM362.76,313.82L361.52,311.49L361.52,316.29L362.76,318.62ZM361.52,311.49L361.09,309.06L361.09,313.86L361.52,316.29ZM405.89,278.84L405.88,278.73L405.88,283.53L405.89,283.64ZM405.88,278.73L405.83,278.62L405.83,283.42L405.88,283.53ZM405.83,278.62L405.76,278.52L405.76,283.32L405.83,283.42ZM405.76,278.52L405.66,278.43L405.66,283.23L405.76,283.32ZM405.66,278.43L405.53,278.35L405.53,283.15L405.66,283.23ZM405.53,278.35L307.25,221.60L307.25,226.40L405.53,283.15ZM480.45,254.15L480.29,252.29L480.29,257.09L480.45,258.95ZM480.29,252.29L479.82,250.45L479.82,255.25L480.29,257.09ZM479.82,250.45L479.04,248.65L479.04,253.45L479.82,255.25ZM479.04,248.65L477.95,246.90L477.95,251.70L479.04,253.45ZM477.95,246.90L476.58,245.22L476.58,250.02L477.95,251.70ZM476.58,245.22L474.92,243.62L474.92,248.42L476.58,250.02ZM474.92,243.62L473.00,242.13L473.00,246.93L474.92,248.42ZM473.00,242.13L470.84,240.75L470.84,245.55L473.00,246.93ZM470.84,240.75L468.45,239.50L468.45,244.30L470.84,245.55ZM393.66,309.00L393.53,308.02L393.53,312.82L393.66,313.80ZM393.53,308.02L393.13,307.06L393.13,311.86L393.53,312.82ZM393.13,307.06L392.48,306.14L392.48,310.94L393.13,311.86ZM392.48,306.14L391.58,305.30L391.58,310.10L392.48,310.94ZM391.58,305.30L390.47,304.55L390.47,309.35L391.58,310.10ZM390.47,304.55L389.17,303.91L389.17,308.71L390.47,309.35ZM519.48,289.20L519.35,288.19L519.35,292.99L519.48,294.00ZM519.35,288.19L518.94,287.21L518.94,292.01L519.35,292.99ZM518.94,287.21L518.27,286.28L518.27,291.08L518.94,292.01ZM518.27,286.28L517.35,285.42L517.35,290.22L518.27,291.08ZM517.35,285.42L516.22,284.65L516.22,289.45L517.35,290.22ZM516.22,284.65L514.89,283.99L514.89,288.79L516.22,289.45ZM423.57,206.70L423.40,205.99L423.40,210.79L423.57,211.50ZM423.40,205.99L422.93,205.32L422.93,210.12L423.40,210.79ZM422.93,205.32L422.17,204.75L422.17,209.55L422.93,210.12ZM422.17,204.75L421.18,204.31L421.18,209.11L422.17,209.55ZM370.22,237.50L370.06,236.79L370.06,241.59L370.22,242.30ZM370.06,236.79L369.58,236.12L369.58,240.92L370.06,241.59ZM369.58,236.12L368.82,235.55L368.82,240.35L369.58,240.92ZM368.82,235.55L367.83,235.11L367.83,239.91L368.82,240.35ZM482.80,236.70L482.64,235.99L482.64,240.79L482.80,241.50ZM482.64,235.99L482.16,235.32L482.16,240.12L482.64,240.79ZM482.16,235.32L481.40,234.75L481.40,239.55L482.16,240.12ZM481.40,234.75L480.41,234.31L480.41,239.11L481.40,239.55ZM422.18,271.70L422.02,270.99L422.02,275.79L422.18,276.50ZM422.02,270.99L421.54,270.32L421.54,275.12L422.02,275.79ZM421.54,270.32L420.78,269.75L420.78,274.55L421.54,275.12ZM420.78,269.75L419.79,269.31L419.79,274.11L420.78,274.55ZM540.05,274.05L539.88,273.34L539.88,278.14L540.05,278.85ZM539.88,273.34L539.41,272.67L539.41,277.47L539.88,278.14ZM539.41,272.67L538.65,272.10L538.65,276.90L539.41,277.47ZM538.65,272.10L537.66,271.66L537.66,276.46L538.65,276.90ZM486.87,304.75L486.71,304.04L486.71,308.84L486.87,309.55ZM486.71,304.04L486.23,303.37L486.23,308.17L486.71,308.84ZM486.23,303.37L485.47,302.80L485.47,307.60L486.23,308.17ZM485.47,302.80L484.48,302.36L484.48,307.16L485.47,307.60ZM502.97,263.90L527.56,278.10L527.56,282.90L502.97,268.70ZM527.56,278.10L529.91,279.64L529.91,284.44L527.56,282.90ZM529.91,279.64L531.88,281.35L531.88,286.15L529.91,284.44ZM531.88,281.35L533.46,283.19L533.46,287.99L531.88,286.15ZM533.46,283.19L534.60,285.14L534.60,289.94L533.46,287.99ZM534.60,285.14L535.29,287.15L535.29,291.95L534.60,289.94ZM535.29,287.15L535.53,289.20L535.53,294.00L535.29,291.95ZM468.76,283.65L493.36,297.85L493.36,302.65L468.76,288.45ZM493.36,297.85L495.88,299.10L495.88,303.90L493.36,302.65ZM792.39,434.25L792.24,432.39L792.24,437.19L792.39,439.05ZM792.24,432.39L791.76,430.55L791.76,435.35L792.24,437.19ZM791.76,430.55L790.98,428.75L790.98,433.55L791.76,435.35ZM790.98,428.75L789.90,427.00L789.90,431.80L790.98,433.55ZM789.90,427.00L788.52,425.32L788.52,430.12L789.90,431.80ZM788.52,425.32L786.86,423.72L786.86,428.52L788.52,430.12ZM786.86,423.72L784.94,422.23L784.94,427.03L786.86,428.52ZM784.94,422.23L782.78,420.85L782.78,425.65L784.94,427.03ZM782.78,420.85L780.39,419.60L780.39,424.40L782.78,425.65ZM675.47,471.70L675.33,470.72L675.33,475.52L675.47,476.50ZM675.33,470.72L674.93,469.76L674.93,474.56L675.33,475.52ZM674.93,469.76L674.28,468.84L674.28,473.64L674.93,474.56ZM674.28,468.84L673.39,468.00L673.39,472.80L674.28,473.64ZM673.39,468.00L672.28,467.25L672.28,472.05L673.39,472.80ZM672.28,467.25L670.98,466.61L670.98,471.41L672.28,472.05ZM710.01,399.20L709.87,398.19L709.87,402.99L710.01,404.00ZM709.87,398.19L709.46,397.21L709.46,402.01L709.87,402.99ZM709.46,397.21L708.79,396.28L708.79,401.08L709.46,402.01ZM708.79,396.28L707.88,395.42L707.88,400.22L708.79,401.08ZM707.88,395.42L706.74,394.65L706.74,399.45L707.88,400.22ZM706.74,394.65L705.41,393.99L705.41,398.79L706.74,399.45ZM846.53,450.90L846.37,450.19L846.37,454.99L846.53,455.70ZM846.37,450.19L845.89,449.52L845.89,454.32L846.37,454.99ZM845.89,449.52L845.13,448.95L845.13,453.75L845.89,454.32ZM845.13,448.95L844.15,448.51L844.15,453.31L845.13,453.75ZM793.19,481.70L793.02,480.99L793.02,485.79L793.19,486.50ZM793.02,480.99L792.55,480.32L792.55,485.12L793.02,485.79ZM792.55,480.32L791.79,479.75L791.79,484.55L792.55,485.12ZM791.79,479.75L790.80,479.31L790.80,484.11L791.79,484.55ZM794.57,416.70L794.41,415.99L794.41,420.79L794.57,421.50ZM794.41,415.99L793.93,415.32L793.93,420.12L794.41,420.79ZM793.93,415.32L793.17,414.75L793.17,419.55L793.93,420.12ZM793.17,414.75L792.18,414.31L792.18,419.11L793.17,419.55ZM733.95,451.70L733.79,450.99L733.79,455.79L733.95,456.50ZM733.79,450.99L733.31,450.32L733.31,455.12L733.79,455.79ZM733.31,450.32L732.55,449.75L732.55,454.55L733.31,455.12ZM732.55,449.75L731.56,449.31L731.56,454.11L732.55,454.55ZM729.88,383.65L729.72,382.94L729.72,387.74L729.88,388.45ZM729.72,382.94L729.24,382.27L729.24,387.07L729.72,387.74ZM729.24,382.27L728.48,381.70L728.48,386.50L729.24,387.07ZM728.48,381.70L727.49,381.26L727.49,386.06L728.48,386.50ZM676.71,414.35L676.54,413.64L676.54,418.44L676.71,419.15ZM676.54,413.64L676.07,412.97L676.07,417.77L676.54,418.44ZM676.07,412.97L675.31,412.40L675.31,417.20L676.07,417.77ZM675.31,412.40L674.32,411.96L674.32,416.76L675.31,417.20ZM742.68,402.30L718.09,388.10L718.09,392.90L742.68,407.10ZM718.09,388.10L715.41,386.75L715.41,391.55L718.09,392.90ZM708.48,422.05L683.88,407.85L683.88,412.65L708.48,426.85ZM683.88,407.85L681.72,406.39L681.72,411.19L683.88,412.65ZM681.72,406.39L679.98,404.75L679.98,409.55L681.72,411.19ZM679.98,404.75L678.71,402.98L678.71,407.78L679.98,409.55ZM678.71,402.98L677.94,401.11L677.94,405.91L678.71,407.78ZM677.94,401.11L677.67,399.20L677.67,404.00L677.94,405.91ZM651.10,347.60L651.05,347.27L651.05,352.07L651.10,352.40ZM651.05,347.27L650.92,346.94L650.92,351.74L651.05,352.07ZM650.92,346.94L650.69,346.64L650.69,351.44L650.92,351.74ZM650.69,346.64L650.39,346.35L650.39,351.15L650.69,351.44ZM650.39,346.35L650.02,346.10L650.02,350.90L650.39,351.15ZM650.02,346.10L600.31,317.40L600.31,322.20L650.02,350.90ZM600.31,317.40L599.87,317.18L599.87,321.98L600.31,322.20Z"/>
<path fill="#a39890" stroke="#a39890" stroke-width="0.45" d="M525.08,250.60L525.07,250.69L525.07,255.49L525.08,255.40ZM516.38,256.01L516.36,256.10L516.36,260.90L516.38,260.81ZM641.11,233.85L641.05,234.23L641.05,239.03L641.11,238.65ZM605.55,258.43L605.31,260.20L605.31,265.00L605.55,263.23ZM830.51,343.20L830.45,343.58L830.45,348.38L830.51,348.00ZM736.19,382.84L736.18,382.95L736.18,387.75L736.19,387.64ZM901.17,468.50L901.12,468.88L901.12,473.68L901.17,473.30ZM656.22,483.25L652.50,482.10L652.50,486.90L656.22,488.05ZM372.00,308.02L371.86,309.00L371.86,313.80L372.00,312.82ZM497.33,288.19L497.19,289.20L497.19,294.00L497.33,292.99ZM529.26,291.11L529.53,289.20L529.53,294.00L529.26,295.91ZM653.80,470.72L653.67,471.70L653.67,476.50L653.80,475.52ZM687.85,398.19L687.72,399.20L687.72,404.00L687.85,402.99ZM671.91,397.15L671.67,399.20L671.67,404.00L671.91,401.95ZM555.98,340.57L555.93,340.90L555.93,345.70L555.98,345.37Z"/>
<path fill="#a59a91" stroke="#a59a91" stroke-width="0.45" d="M525.07,250.69L525.03,250.77L525.03,255.57L525.07,255.49ZM516.41,255.93L516.38,256.01L516.38,260.81L516.41,260.73ZM641.05,234.23L640.90,234.59L640.90,239.39L641.05,239.03ZM606.27,256.70L605.55,258.43L605.55,263.23L606.27,261.50ZM830.45,343.58L830.30,343.94L830.30,348.74L830.45,348.38ZM736.24,382.73L736.19,382.84L736.19,387.64L736.24,387.53ZM901.12,468.88L900.97,469.24L900.97,474.04L901.12,473.68ZM839.99,494.98L838.93,497.53L838.93,502.33L839.99,499.78ZM838.94,505.24L838.90,505.35L838.90,510.15L838.94,510.04ZM685.97,467.67L685.77,468.09L685.77,472.89L685.97,472.47ZM456.28,326.69L456.12,326.65L456.12,331.45L456.28,331.49ZM415.36,345.18L414.79,345.04L414.79,349.84L415.36,349.98ZM416.22,248.65L415.44,250.45L415.44,255.25L416.22,253.45ZM372.40,307.06L372.00,308.02L372.00,312.82L372.40,311.86ZM497.74,287.21L497.33,288.19L497.33,292.99L497.74,292.01ZM528.49,292.98L529.26,291.11L529.26,295.91L528.49,297.78ZM728.16,428.75L727.38,430.55L727.38,435.35L728.16,433.55ZM654.20,469.76L653.80,470.72L653.80,475.52L654.20,474.56ZM688.26,397.21L687.85,398.19L687.85,402.99L688.26,402.01ZM556.11,340.24L555.98,340.57L555.98,345.37L556.11,345.04Z"/>
<path fill="#a79c93" stroke="#a79c93" stroke-width="0.45" d="M525.03,250.77L524.97,250.86L524.97,255.66L525.03,255.57ZM516.47,255.84L516.41,255.93L516.41,260.73L516.47,260.64ZM640.90,234.59L640.65,234.94L640.65,239.74L640.90,239.39ZM607.44,255.06L606.27,256.70L606.27,261.50L607.44,259.86ZM830.30,343.94L830.05,344.29L830.05,349.09L830.30,348.74ZM736.31,382.63L736.24,382.73L736.24,387.53L736.31,387.43ZM900.97,469.24L900.72,469.59L900.72,474.39L900.97,474.04ZM373.05,306.14L372.40,307.06L372.40,311.86L373.05,310.94ZM498.41,286.28L497.74,287.21L497.74,292.01L498.41,291.08ZM414.65,205.32L414.18,205.99L414.18,210.79L414.65,210.12ZM361.31,236.12L360.83,236.79L360.83,241.59L361.31,240.92ZM473.89,235.32L473.41,235.99L473.41,240.79L473.89,240.12ZM413.27,270.32L412.79,270.99L412.79,275.79L413.27,275.12ZM531.13,272.67L530.66,273.34L530.66,278.14L531.13,277.47ZM477.96,303.37L477.48,304.04L477.48,308.84L477.96,308.17ZM527.22,294.75L528.49,292.98L528.49,297.78L527.22,299.55ZM654.86,468.84L654.20,469.76L654.20,474.56L654.86,473.64ZM688.93,396.28L688.26,397.21L688.26,402.01L688.93,401.08ZM837.62,449.52L837.14,450.19L837.14,454.99L837.62,454.32ZM784.27,480.32L783.80,480.99L783.80,485.79L784.27,485.12ZM785.66,415.32L785.18,415.99L785.18,420.79L785.66,420.12ZM725.04,450.32L724.56,450.99L724.56,455.79L725.04,455.12ZM720.97,382.27L720.49,382.94L720.49,387.74L720.97,387.07ZM667.79,412.97L667.32,413.64L667.32,418.44L667.79,417.77ZM556.33,339.94L556.11,340.24L556.11,345.04L556.33,344.74Z"/>
<path fill="#aa9f97" stroke="#aa9f97" stroke-width="0.45" d="M524.97,250.86L524.89,250.93L524.89,255.73L524.97,255.66ZM516.55,255.77L516.47,255.84L516.47,260.64L516.55,260.57ZM640.65,234.94L640.31,235.26L640.31,240.06L640.65,239.74ZM609.05,253.55L607.44,255.06L607.44,259.86L609.05,258.35ZM830.05,344.29L829.71,344.61L829.71,349.41L830.05,349.09ZM736.41,382.53L736.31,382.63L736.31,387.43L736.41,387.33ZM900.72,469.59L900.38,469.91L900.38,474.71L900.72,474.39ZM420.34,243.62L418.68,245.22L418.68,250.02L420.34,248.42ZM373.95,305.30L373.05,306.14L373.05,310.94L373.95,310.10ZM499.32,285.42L498.41,286.28L498.41,291.08L499.32,290.22ZM525.48,296.39L527.22,294.75L527.22,299.55L525.48,301.19ZM732.28,423.72L730.62,425.32L730.62,430.12L732.28,428.52ZM655.75,468.00L654.86,468.84L654.86,473.64L655.75,472.80ZM689.85,395.42L688.93,396.28L688.93,401.08L689.85,400.22ZM556.63,339.65L556.33,339.94L556.33,344.74L556.63,344.45Z"/>
<path fill="#afa59c" stroke="#afa59c" stroke-width="0.45" d="M524.89,250.93L524.79,251.00L524.79,255.80L524.89,255.73ZM516.65,255.70L516.55,255.77L516.55,260.57L516.65,260.50ZM640.31,235.26L639.89,235.55L639.89,240.35L640.31,240.06ZM611.05,252.20L609.05,253.55L609.05,258.35L611.05,257.00ZM829.71,344.61L829.29,344.90L829.29,349.70L829.71,349.41ZM736.53,382.45L736.41,382.53L736.41,387.33L736.53,387.25ZM900.38,469.91L899.95,470.20L899.95,475.00L900.38,474.71ZM838.72,505.54L838.60,505.62L838.60,510.42L838.72,510.34ZM375.06,304.55L373.95,305.30L373.95,310.10L375.06,309.35ZM500.46,284.65L499.32,285.42L499.32,290.22L500.46,289.45ZM523.32,297.85L525.48,296.39L525.48,301.19L523.32,302.65ZM656.86,467.25L655.75,468.00L655.75,472.80L656.86,472.05ZM690.98,394.65L689.85,395.42L689.85,400.22L690.98,399.45ZM557.01,339.40L556.63,339.65L556.63,344.45L557.01,344.20Z"/>
<path fill="#b3a8a0" stroke="#b3a8a0" stroke-width="0.45" d="M524.79,251.00L516.65,255.70L516.65,260.50L524.79,255.80ZM639.89,235.55L611.05,252.20L611.05,257.00L639.89,240.35ZM829.29,344.90L821.32,349.50L821.32,354.30L829.29,349.70ZM803.65,343.70L736.53,382.45L736.53,387.25L803.65,348.50ZM899.95,470.20L883.19,479.88L883.19,484.68L899.95,475.00ZM838.60,505.62L821.84,515.30L821.84,520.10L838.60,510.42ZM464.52,286.10L468.76,283.65L468.76,288.45L464.52,290.90ZM498.72,266.35L502.97,263.90L502.97,268.70L498.72,271.15ZM595.11,317.40L557.01,339.40L557.01,344.20L595.11,322.20Z"/>
<path fill="#b6aca3" stroke="#b6aca3" stroke-width="0.45" d="M821.32,349.50L820.82,349.75L820.82,354.55L821.32,354.30ZM803.80,343.63L803.65,343.70L803.65,348.50L803.80,348.43ZM883.19,479.88L883.05,479.95L883.05,484.75L883.19,484.68ZM821.84,515.30L821.34,515.55L821.34,520.35L821.84,520.10ZM376.36,303.91L375.06,304.55L375.06,309.35L376.36,308.71ZM501.79,283.99L500.46,284.65L500.46,289.45L501.79,288.79ZM520.79,299.10L523.32,297.85L523.32,302.65L520.79,303.90ZM658.16,466.61L656.86,467.25L656.86,472.05L658.16,471.41ZM692.31,393.99L690.98,394.65L690.98,399.45L692.31,398.79ZM595.55,317.18L595.11,317.40L595.11,322.20L595.55,321.98Z"/>
<path fill="#bfb5ad" stroke="#bfb5ad" stroke-width="0.45" d="M820.82,349.75L820.26,349.94L820.26,354.74L820.82,354.55ZM803.96,343.57L803.80,343.63L803.80,348.43L803.96,348.37ZM821.34,515.55L820.78,515.74L820.78,520.54L821.34,520.35ZM377.82,303.39L376.36,303.91L376.36,308.71L377.82,308.19ZM503.28,283.47L501.79,283.99L501.79,288.79L503.28,288.27ZM517.96,300.10L520.79,299.10L520.79,303.90L517.96,304.90ZM659.62,466.09L658.16,466.61L658.16,471.41L659.62,470.89ZM693.80,393.47L692.31,393.99L692.31,398.79L693.80,398.27ZM596.04,317.01L595.55,317.18L595.55,321.98L596.04,321.81Z"/>
<path fill="#c8beb6" stroke="#c8beb6" stroke-width="0.45" d="M820.26,349.94L819.66,350.09L819.66,354.89L820.26,354.74ZM819.03,350.17L818.37,350.20L818.37,355.00L819.03,354.97ZM804.52,343.49L804.33,343.50L804.33,348.30L804.52,348.29ZM804.14,343.53L803.96,343.57L803.96,348.37L804.14,348.33ZM882.89,480.01L882.72,480.05L882.72,484.85L882.89,484.81ZM820.78,515.74L820.18,515.89L820.18,520.69L820.78,520.54ZM819.55,515.97L818.89,516.00L818.89,520.80L819.55,520.77ZM382.76,302.71L381.06,302.78L381.06,307.58L382.76,307.51ZM379.40,303.01L377.82,303.39L377.82,308.19L379.40,307.81ZM508.34,282.77L506.59,282.84L506.59,287.64L508.34,287.57ZM504.89,283.08L503.28,283.47L503.28,288.27L504.89,287.88ZM417.55,204.04L416.40,204.31L416.40,209.11L417.55,208.84ZM364.21,234.84L363.05,235.11L363.05,239.91L364.21,239.64ZM476.79,234.04L475.64,234.31L475.64,239.11L476.79,238.84ZM416.17,269.04L415.02,269.31L415.02,274.11L416.17,273.84ZM534.03,271.39L532.88,271.66L532.88,276.46L534.03,276.19ZM480.86,302.09L479.71,302.36L479.71,307.16L480.86,306.89ZM508.34,301.43L511.65,301.28L511.65,306.08L508.34,306.23ZM514.88,300.83L517.96,300.10L517.96,304.90L514.88,305.63ZM664.57,465.41L662.86,465.48L662.86,470.28L664.57,470.21ZM661.20,465.71L659.62,466.09L659.62,470.89L661.20,470.51ZM698.86,392.77L697.12,392.84L697.12,397.64L698.86,397.57ZM695.42,393.08L693.80,393.47L693.80,398.27L695.42,397.88ZM840.52,448.24L839.37,448.51L839.37,453.31L840.52,453.04ZM787.17,479.04L786.02,479.31L786.02,484.11L787.17,483.84ZM788.56,414.04L787.41,414.31L787.41,419.11L788.56,418.84ZM727.94,449.04L726.79,449.31L726.79,454.11L727.94,453.84ZM723.87,380.99L722.72,381.26L722.72,386.06L723.87,385.79ZM670.69,411.69L669.54,411.96L669.54,416.76L670.69,416.49ZM597.71,316.78L597.14,316.80L597.14,321.60L597.71,321.58ZM596.58,316.88L596.04,317.01L596.04,321.81L596.58,321.68Z"/>
<path fill="#cdc3bb" stroke="#cdc3bb" stroke-width="0.45" d="M819.66,350.09L819.03,350.17L819.03,354.97L819.66,354.89ZM804.33,343.50L804.14,343.53L804.14,348.33L804.33,348.30ZM882.72,480.05L882.54,480.07L882.54,484.87L882.72,484.85ZM869.18,480.07L864.75,480.68L864.75,485.48L869.18,484.87ZM820.18,515.89L819.55,515.97L819.55,520.77L820.18,520.69ZM716.63,458.35L716.44,458.38L716.44,463.18L716.63,463.15ZM455.57,326.62L455.39,326.64L455.39,331.44L455.57,331.42ZM417.83,345.23L417.21,345.30L417.21,350.10L417.83,350.03ZM441.23,235.56L438.10,236.02L438.10,240.82L441.23,240.36ZM381.06,302.78L379.40,303.01L379.40,307.81L381.06,307.58ZM506.59,282.84L504.89,283.08L504.89,287.88L506.59,287.64ZM511.65,301.28L514.88,300.83L514.88,305.63L511.65,306.08ZM753.17,415.66L750.04,416.12L750.04,420.92L753.17,420.46ZM662.86,465.48L661.20,465.71L661.20,470.51L662.86,470.28ZM697.12,392.84L695.42,393.08L695.42,397.88L697.12,397.64ZM695.31,383.64L691.83,384.04L691.83,388.84L695.31,388.44ZM597.14,316.80L596.58,316.88L596.58,321.68L597.14,321.60Z"/>
<path fill="#bab0a8" stroke="#bab0a8" stroke-width="0.45" d="M818.37,350.20L817.72,350.17L817.72,354.97L818.37,355.00ZM804.71,343.50L804.52,343.49L804.52,348.29L804.71,348.30ZM818.89,516.00L818.24,515.97L818.24,520.77L818.89,520.80ZM384.47,302.78L382.76,302.71L382.76,307.51L384.47,307.58ZM510.08,282.84L508.34,282.77L508.34,287.57L510.08,287.64ZM505.02,301.28L508.34,301.43L508.34,306.23L505.02,306.08ZM666.27,465.48L664.57,465.41L664.57,470.21L666.27,470.28ZM700.61,392.84L698.86,392.77L698.86,397.57L700.61,397.64ZM598.29,316.80L597.71,316.78L597.71,321.58L598.29,321.60Z"/>
<path fill="#ada29a" stroke="#ada29a" stroke-width="0.45" d="M817.72,350.17L817.09,350.09L817.09,354.89L817.72,354.97ZM804.90,343.53L804.71,343.50L804.71,348.30L804.90,348.33ZM818.24,515.97L817.61,515.89L817.61,520.69L818.24,520.77ZM422.26,242.13L420.34,243.62L420.34,248.42L422.26,246.93ZM386.13,303.01L384.47,302.78L384.47,307.58L386.13,307.81ZM511.78,283.08L510.08,282.84L510.08,287.64L511.78,287.88ZM501.79,300.83L505.02,301.28L505.02,306.08L501.79,305.63ZM734.20,422.23L732.28,423.72L732.28,428.52L734.20,427.03ZM667.94,465.71L666.27,465.48L666.27,470.28L667.94,470.51ZM702.31,393.08L700.61,392.84L700.61,397.64L702.31,397.88ZM598.85,316.88L598.29,316.80L598.29,321.60L598.85,321.68Z"/>
<path fill="#a69b92" stroke="#a69b92" stroke-width="0.45" d="M817.09,350.09L816.48,349.94L816.48,354.74L817.09,354.89ZM805.07,343.57L804.90,343.53L804.90,348.33L805.07,348.37ZM817.61,515.89L817.00,515.74L817.00,520.54L817.61,520.69ZM685.77,474.30L684.50,476.63L684.50,481.43L685.77,479.10ZM387.71,303.39L386.13,303.01L386.13,307.81L387.71,308.19ZM513.40,283.47L511.78,283.08L511.78,287.88L513.40,288.27ZM421.18,204.31L420.03,204.04L420.03,208.84L421.18,209.11ZM367.83,235.11L366.68,234.84L366.68,239.64L367.83,239.91ZM480.41,234.31L479.26,234.04L479.26,238.84L480.41,239.11ZM419.79,269.31L418.64,269.04L418.64,273.84L419.79,274.11ZM537.66,271.66L536.51,271.39L536.51,276.19L537.66,276.46ZM484.48,302.36L483.33,302.09L483.33,306.89L484.48,307.16ZM498.72,300.10L501.79,300.83L501.79,305.63L498.72,304.90ZM669.52,466.09L667.94,465.71L667.94,470.51L669.52,470.89ZM703.92,393.47L702.31,393.08L702.31,397.88L703.92,398.27ZM844.15,448.51L842.99,448.24L842.99,453.04L844.15,453.31ZM790.80,479.31L789.65,479.04L789.65,483.84L790.80,484.11ZM792.18,414.31L791.03,414.04L791.03,418.84L792.18,419.11ZM731.56,449.31L730.41,449.04L730.41,453.84L731.56,454.11ZM727.49,381.26L726.34,380.99L726.34,385.79L727.49,386.06ZM674.32,411.96L673.17,411.69L673.17,416.49L674.32,416.76ZM673.74,393.19L672.60,395.14L672.60,399.94L673.74,397.99ZM599.38,317.01L598.85,316.88L598.85,321.68L599.38,321.81Z"/>
<path fill="#a3988f" stroke="#a3988f" stroke-width="0.45" d="M816.48,349.94L815.93,349.75L815.93,354.55L816.48,354.74ZM805.24,343.63L805.07,343.57L805.07,348.37L805.24,348.43ZM817.00,515.74L816.45,515.55L816.45,520.35L817.00,520.54ZM717.52,458.48L717.36,458.43L717.36,463.23L717.52,463.28ZM456.44,326.75L456.28,326.69L456.28,331.49L456.44,331.55ZM414.79,345.04L414.26,344.84L414.26,349.64L414.79,349.84ZM465.86,238.39L463.10,237.44L463.10,242.24L465.86,243.19ZM414.96,252.29L414.81,254.15L414.81,258.95L414.96,257.09ZM389.17,303.91L387.71,303.39L387.71,308.19L389.17,308.71ZM514.89,283.99L513.40,283.47L513.40,288.27L514.89,288.79ZM495.88,299.10L498.72,300.10L498.72,304.90L495.88,303.90ZM777.81,418.49L775.04,417.54L775.04,422.34L777.81,423.29ZM726.91,432.39L726.75,434.25L726.75,439.05L726.91,437.19ZM670.98,466.61L669.52,466.09L669.52,470.89L670.98,471.41ZM705.41,393.99L703.92,393.47L703.92,398.27L705.41,398.79ZM599.87,317.18L599.38,317.01L599.38,321.81L599.87,321.98Z"/>
<path fill="#bfb5ac" stroke="#bfb5ac" stroke-width="0.45" d="M883.05,479.95L882.89,480.01L882.89,484.81L883.05,484.75Z"/>
<path fill="#c9bfb7" stroke="#c9bfb7" stroke-width="0.45" d="M882.54,480.07L882.35,480.09L882.35,484.89L882.54,484.87ZM668.67,483.99L664.46,484.22L664.46,489.02L668.67,488.79Z"/>
<path fill="#bdb2aa" stroke="#bdb2aa" stroke-width="0.45" d="M882.35,480.09L882.16,480.08L882.16,484.88L882.35,484.89Z"/>
<path fill="#b6aba3" stroke="#b6aba3" stroke-width="0.45" d="M882.16,480.08L878.25,479.78L878.25,484.58L882.16,484.88ZM852.70,484.31L849.29,486.05L849.29,490.85L852.70,489.11ZM454.91,326.79L419.47,344.72L419.47,349.52L454.91,331.59ZM420.03,204.04L418.79,203.94L418.79,208.74L420.03,208.84ZM366.68,234.84L365.44,234.74L365.44,239.54L366.68,239.64ZM479.26,234.04L478.03,233.94L478.03,238.74L479.26,238.84ZM418.64,269.04L417.40,268.94L417.40,273.74L418.64,273.84ZM536.51,271.39L535.27,271.29L535.27,276.09L536.51,276.19ZM483.33,302.09L482.10,301.99L482.10,306.79L483.33,306.89ZM842.99,448.24L841.76,448.14L841.76,452.94L842.99,453.04ZM789.65,479.04L788.41,478.94L788.41,483.74L789.65,483.84ZM791.03,414.04L789.80,413.94L789.80,418.74L791.03,418.84ZM730.41,449.04L729.17,448.94L729.17,453.74L730.41,453.84ZM726.34,380.99L725.10,380.89L725.10,385.69L726.34,385.79ZM673.17,411.69L671.93,411.59L671.93,416.39L673.17,416.49ZM682.31,386.75L679.64,388.10L679.64,392.90L682.31,391.55Z"/>
<path fill="#c1b7af" stroke="#c1b7af" stroke-width="0.45" d="M878.25,479.78L873.70,479.76L873.70,484.56L878.25,484.58Z"/>
<path fill="#cac0b8" stroke="#cac0b8" stroke-width="0.45" d="M873.70,479.76L869.18,480.07L869.18,484.87L873.70,484.56ZM864.75,480.68L860.49,481.60L860.49,486.40L864.75,485.48Z"/>
<path fill="#c3b9b1" stroke="#c3b9b1" stroke-width="0.45" d="M860.49,481.60L856.45,482.82L856.45,487.62L860.49,486.40ZM676.46,482.16L672.72,483.30L672.72,488.10L676.46,486.96Z"/>
<path fill="#bcb2a9" stroke="#bcb2a9" stroke-width="0.45" d="M856.45,482.82L852.70,484.31L852.70,489.11L856.45,487.62Z"/>
<path fill="#b0a59d" stroke="#b0a59d" stroke-width="0.45" d="M849.29,486.05L846.27,488.02L846.27,492.82L849.29,490.85ZM705.90,384.04L702.41,383.64L702.41,388.44L705.90,388.84ZM679.64,388.10L677.29,389.64L677.29,394.44L679.64,392.90Z"/>
<path fill="#aca198" stroke="#aca198" stroke-width="0.45" d="M846.27,488.02L843.69,490.18L843.69,494.98L846.27,492.82ZM456.12,326.65L455.94,326.62L455.94,331.42L456.12,331.45ZM415.97,345.27L415.36,345.18L415.36,349.98L415.97,350.07Z"/>
<path fill="#a99e95" stroke="#a99e95" stroke-width="0.45" d="M843.69,490.18L841.59,492.51L841.59,497.31L843.69,494.98Z"/>
<path fill="#a69b93" stroke="#a69b93" stroke-width="0.45" d="M841.59,492.51L839.99,494.98L839.99,499.78L841.59,497.31ZM417.30,246.90L416.22,248.65L416.22,253.45L417.30,251.70ZM729.25,427.00L728.16,428.75L728.16,433.55L729.25,431.80Z"/>
<path fill="#a49890" stroke="#a49890" stroke-width="0.45" d="M838.93,497.53L838.40,500.14L838.40,504.94L838.93,502.33ZM838.96,505.14L838.94,505.24L838.94,510.04L838.96,509.94ZM685.77,468.09L685.68,468.53L685.68,473.33L685.77,472.89ZM686.24,471.88L685.77,474.30L685.77,479.10L686.24,476.68Z"/>
<path fill="#a79c94" stroke="#a79c94" stroke-width="0.45" d="M838.90,505.35L838.82,505.45L838.82,510.25L838.90,510.15ZM460.19,236.64L457.16,236.02L457.16,240.82L460.19,241.44ZM772.13,416.74L769.10,416.12L769.10,420.92L772.13,421.54Z"/>
<path fill="#aba097" stroke="#aba097" stroke-width="0.45" d="M838.82,505.45L838.72,505.54L838.72,510.34L838.82,510.25Z"/>
<path fill="#a59a92" stroke="#a59a92" stroke-width="0.45" d="M717.36,458.43L717.19,458.38L717.19,463.18L717.36,463.23Z"/>
<path fill="#aca199" stroke="#aca199" stroke-width="0.45" d="M717.19,458.38L717.00,458.36L717.00,463.16L717.19,463.18Z"/>
<path fill="#b9afa6" stroke="#b9afa6" stroke-width="0.45" d="M717.00,458.36L716.82,458.35L716.82,463.15L717.00,463.16ZM416.40,204.31L415.41,204.75L415.41,209.55L416.40,209.11ZM363.05,235.11L362.07,235.55L362.07,240.35L363.05,239.91ZM475.64,234.31L474.65,234.75L474.65,239.55L475.64,239.11ZM415.02,269.31L414.03,269.75L414.03,274.55L415.02,274.11ZM532.88,271.66L531.89,272.10L531.89,276.90L532.88,276.46ZM479.71,302.36L478.72,302.80L478.72,307.60L479.71,307.16ZM839.37,448.51L838.38,448.95L838.38,453.75L839.37,453.31ZM786.02,479.31L785.03,479.75L785.03,484.55L786.02,484.11ZM787.41,414.31L786.42,414.75L786.42,419.55L787.41,419.11ZM726.79,449.31L725.80,449.75L725.80,454.55L726.79,454.11ZM722.72,381.26L721.73,381.70L721.73,386.50L722.72,386.06ZM669.54,411.96L668.55,412.40L668.55,417.20L669.54,416.76Z"/>
<path fill="#c7bdb4" stroke="#c7bdb4" stroke-width="0.45" d="M716.82,458.35L716.63,458.35L716.63,463.15L716.82,463.15Z"/>
<path fill="#cabfb7" stroke="#cabfb7" stroke-width="0.45" d="M716.44,458.38L716.27,458.42L716.27,463.22L716.44,463.18Z"/>
<path fill="#c6bbb3" stroke="#c6bbb3" stroke-width="0.45" d="M716.27,458.42L688.47,466.07L688.47,470.87L716.27,463.22Z"/>
<path fill="#c1b7ae" stroke="#c1b7ae" stroke-width="0.45" d="M688.47,466.07L687.81,466.30L687.81,471.10L688.47,470.87Z"/>
<path fill="#b8ada5" stroke="#b8ada5" stroke-width="0.45" d="M687.81,466.30L687.22,466.57L687.22,471.37L687.81,471.10ZM679.75,480.63L676.46,482.16L676.46,486.96L679.75,485.43ZM455.94,326.62L455.75,326.61L455.75,331.41L455.94,331.42ZM416.59,345.31L415.97,345.27L415.97,350.07L416.59,350.11Z"/>
<path fill="#b1a69d" stroke="#b1a69d" stroke-width="0.45" d="M687.22,466.57L686.70,466.90L686.70,471.70L687.22,471.37ZM424.42,240.75L422.26,242.13L422.26,246.93L424.42,245.55ZM736.36,420.85L734.20,422.23L734.20,427.03L736.36,425.65Z"/>
<path fill="#aba098" stroke="#aba098" stroke-width="0.45" d="M686.70,466.90L686.29,467.27L686.29,472.07L686.70,471.70Z"/>
<path fill="#a89c94" stroke="#a89c94" stroke-width="0.45" d="M686.29,467.27L685.97,467.67L685.97,472.47L686.29,472.07Z"/>
<path fill="#a99e96" stroke="#a99e96" stroke-width="0.45" d="M684.50,476.63L682.46,478.77L682.46,483.57L684.50,481.43ZM660.26,483.97L656.22,483.25L656.22,488.05L660.26,488.77Z"/>
<path fill="#afa49c" stroke="#afa49c" stroke-width="0.45" d="M682.46,478.77L679.75,480.63L679.75,485.43L682.46,483.57Z"/>
<path fill="#ccc2ba" stroke="#ccc2ba" stroke-width="0.45" d="M672.72,483.30L668.67,483.99L668.67,488.79L672.72,488.10Z"/>
<path fill="#b8aea5" stroke="#b8aea5" stroke-width="0.45" d="M664.46,484.22L660.26,483.97L660.26,488.77L664.46,489.02Z"/>
<path fill="#c5bbb3" stroke="#c5bbb3" stroke-width="0.45" d="M455.75,326.61L455.57,326.62L455.57,331.42L455.75,331.41ZM417.21,345.30L416.59,345.31L416.59,350.11L417.21,350.10Z"/>
<path fill="#cbc0b8" stroke="#cbc0b8" stroke-width="0.45" d="M455.39,326.64L455.22,326.67L455.22,331.47L455.39,331.44ZM418.42,345.10L417.83,345.23L417.83,350.03L418.42,349.90ZM438.10,236.02L435.07,236.64L435.07,241.44L438.10,240.82ZM750.04,416.12L747.01,416.74L747.01,421.54L750.04,420.92Z"/>
<path fill="#c3b8b0" stroke="#c3b8b0" stroke-width="0.45" d="M455.22,326.67L455.05,326.72L455.05,331.52L455.22,331.47ZM418.97,344.93L418.42,345.10L418.42,349.90L418.97,349.73Z"/>
<path fill="#baafa7" stroke="#baafa7" stroke-width="0.45" d="M455.05,326.72L454.91,326.79L454.91,331.59L455.05,331.52ZM419.47,344.72L418.97,344.93L418.97,349.73L419.47,349.52Z"/>
<path fill="#a2978f" stroke="#a2978f" stroke-width="0.45" d="M468.45,239.50L465.86,238.39L465.86,243.19L468.45,244.30ZM780.39,419.60L777.81,418.49L777.81,423.29L780.39,424.40Z"/>
<path fill="#a49991" stroke="#a49991" stroke-width="0.45" d="M463.10,237.44L460.19,236.64L460.19,241.44L463.10,242.24ZM775.04,417.54L772.13,416.74L772.13,421.54L775.04,422.34ZM672.60,395.14L671.91,397.15L671.91,401.95L672.60,399.94Z"/>
<path fill="#aca299" stroke="#aca299" stroke-width="0.45" d="M457.16,236.02L454.03,235.56L454.03,240.36L457.16,240.82ZM769.10,416.12L765.97,415.66L765.97,420.46L769.10,420.92Z"/>
<path fill="#b4a9a1" stroke="#b4a9a1" stroke-width="0.45" d="M454.03,235.56L450.85,235.29L450.85,240.09L454.03,240.36ZM765.97,415.66L762.79,415.39L762.79,420.19L765.97,420.46Z"/>
<path fill="#bdb3ab" stroke="#bdb3ab" stroke-width="0.45" d="M450.85,235.29L447.63,235.20L447.63,240.00L450.85,240.09ZM762.79,415.39L759.57,415.30L759.57,420.10L762.79,420.19Z"/>
<path fill="#c6bcb4" stroke="#c6bcb4" stroke-width="0.45" d="M447.63,235.20L444.41,235.29L444.41,240.09L447.63,240.00ZM759.57,415.30L756.35,415.39L756.35,420.19L759.57,420.10Z"/>
<path fill="#ccc1b9" stroke="#ccc1b9" stroke-width="0.45" d="M444.41,235.29L441.23,235.56L441.23,240.36L444.41,240.09ZM756.35,415.39L753.17,415.66L753.17,420.46L756.35,420.19Z"/>
<path fill="#c6bcb3" stroke="#c6bcb3" stroke-width="0.45" d="M435.07,236.64L432.16,237.44L432.16,242.24L435.07,241.44ZM747.01,416.74L744.10,417.54L744.10,422.34L747.01,421.54Z"/>
<path fill="#c0b6ad" stroke="#c0b6ad" stroke-width="0.45" d="M432.16,237.44L429.39,238.39L429.39,243.19L432.16,242.24ZM744.10,417.54L741.34,418.49L741.34,423.29L744.10,422.34Z"/>
<path fill="#bab0a7" stroke="#bab0a7" stroke-width="0.45" d="M429.39,238.39L426.81,239.50L426.81,244.30L429.39,243.19ZM741.34,418.49L738.75,419.60L738.75,424.40L741.34,423.29Z"/>
<path fill="#b5aaa2" stroke="#b5aaa2" stroke-width="0.45" d="M426.81,239.50L424.42,240.75L424.42,245.55L426.81,244.30ZM738.75,419.60L736.36,420.85L736.36,425.65L738.75,424.40Z"/>
<path fill="#a89d94" stroke="#a89d94" stroke-width="0.45" d="M418.68,245.22L417.30,246.90L417.30,251.70L418.68,250.02ZM730.62,425.32L729.25,427.00L729.25,431.80L730.62,430.12ZM709.27,384.70L705.90,384.04L705.90,388.84L709.27,389.50Z"/>
<path fill="#a49990" stroke="#a49990" stroke-width="0.45" d="M415.44,250.45L414.96,252.29L414.96,257.09L415.44,255.25ZM414.18,205.99L414.01,206.70L414.01,211.50L414.18,210.79ZM360.83,236.79L360.67,237.50L360.67,242.30L360.83,241.59ZM473.41,235.99L473.25,236.70L473.25,241.50L473.41,240.79ZM412.79,270.99L412.63,271.70L412.63,276.50L412.79,275.79ZM530.66,273.34L530.49,274.05L530.49,278.85L530.66,278.14ZM477.48,304.04L477.32,304.75L477.32,309.55L477.48,308.84ZM727.38,430.55L726.91,432.39L726.91,437.19L727.38,435.35ZM837.14,450.19L836.98,450.90L836.98,455.70L837.14,454.99ZM783.80,480.99L783.63,481.70L783.63,486.50L783.80,485.79ZM785.18,415.99L785.02,416.70L785.02,421.50L785.18,420.79ZM724.56,450.99L724.40,451.70L724.40,456.50L724.56,455.79ZM720.49,382.94L720.33,383.65L720.33,388.45L720.49,387.74ZM667.32,413.64L667.15,414.35L667.15,419.15L667.32,418.44ZM712.46,385.61L709.27,384.70L709.27,389.50L712.46,390.41Z"/>
<path fill="#cbc1b9" stroke="#cbc1b9" stroke-width="0.45" d="M418.79,203.94L417.55,204.04L417.55,208.84L418.79,208.74ZM365.44,234.74L364.21,234.84L364.21,239.64L365.44,239.54ZM478.03,233.94L476.79,234.04L476.79,238.84L478.03,238.74ZM417.40,268.94L416.17,269.04L416.17,273.84L417.40,273.74ZM535.27,271.29L534.03,271.39L534.03,276.19L535.27,276.09ZM482.10,301.99L480.86,302.09L480.86,306.89L482.10,306.79ZM841.76,448.14L840.52,448.24L840.52,453.04L841.76,452.94ZM788.41,478.94L787.17,479.04L787.17,483.84L788.41,483.74ZM789.80,413.94L788.56,414.04L788.56,418.84L789.80,418.74ZM729.17,448.94L727.94,449.04L727.94,453.84L729.17,453.74ZM725.10,380.89L723.87,380.99L723.87,385.79L725.10,385.69ZM671.93,411.59L670.69,411.69L670.69,416.49L671.93,416.39ZM691.83,384.04L688.46,384.70L688.46,389.50L691.83,388.84Z"/>
<path fill="#aea39a" stroke="#aea39a" stroke-width="0.45" d="M415.41,204.75L414.65,205.32L414.65,210.12L415.41,209.55ZM362.07,235.55L361.31,236.12L361.31,240.92L362.07,240.35ZM474.65,234.75L473.89,235.32L473.89,240.12L474.65,239.55ZM414.03,269.75L413.27,270.32L413.27,275.12L414.03,274.55ZM531.89,272.10L531.13,272.67L531.13,277.47L531.89,276.90ZM478.72,302.80L477.96,303.37L477.96,308.17L478.72,307.60ZM838.38,448.95L837.62,449.52L837.62,454.32L838.38,453.75ZM785.03,479.75L784.27,480.32L784.27,485.12L785.03,484.55ZM786.42,414.75L785.66,415.32L785.66,420.12L786.42,419.55ZM725.80,449.75L725.04,450.32L725.04,455.12L725.80,454.55ZM721.73,381.70L720.97,382.27L720.97,387.07L721.73,386.50ZM668.55,412.40L667.79,412.97L667.79,417.77L668.55,417.20Z"/>
<path fill="#a3978f" stroke="#a3978f" stroke-width="0.45" d="M715.41,386.75L712.46,385.61L712.46,390.41L715.41,391.55Z"/>
<path fill="#bcb1a9" stroke="#bcb1a9" stroke-width="0.45" d="M702.41,383.64L698.86,383.50L698.86,388.30L702.41,388.44Z"/>
<path fill="#c7bdb5" stroke="#c7bdb5" stroke-width="0.45" d="M698.86,383.50L695.31,383.64L695.31,388.44L698.86,388.30Z"/>
<path fill="#c5bbb2" stroke="#c5bbb2" stroke-width="0.45" d="M688.46,384.70L685.27,385.61L685.27,390.41L688.46,389.50Z"/>
<path fill="#bdb3aa" stroke="#bdb3aa" stroke-width="0.45" d="M685.27,385.61L682.31,386.75L682.31,391.55L685.27,390.41Z"/>
<path fill="#aba198" stroke="#aba198" stroke-width="0.45" d="M677.29,389.64L675.32,391.35L675.32,396.15L677.29,394.44Z"/>
<path fill="#a89d95" stroke="#a89d95" stroke-width="0.45" d="M675.32,391.35L673.74,393.19L673.74,397.99L675.32,396.15Z"/>
<path fill="none" stroke="#3a3a3a" stroke-width="0.95" d="M307.25,226.40L306.82,226.11M306.82,226.11L306.48,225.79M306.48,225.79L306.23,225.44M306.23,225.44L306.08,225.08M306.08,225.08L306.03,224.70M368.76,190.43L368.25,188.17M368.25,188.17L368.24,188.06M525.08,255.40L525.07,255.49M525.07,255.49L525.03,255.57M525.03,255.57L524.97,255.66M524.97,255.66L524.89,255.73M524.89,255.73L524.79,255.80M524.79,255.80L516.65,260.50M516.65,260.50L516.55,260.57M516.55,260.57L516.47,260.64M516.47,260.64L516.41,260.73M516.41,260.73L516.38,260.81M516.38,260.81L516.36,260.90M604.82,233.00L604.81,232.89M604.81,232.89L604.76,232.78M604.76,232.78L604.69,232.68M604.69,232.68L604.59,232.58M604.59,232.58L604.47,232.50M604.47,232.50L594.42,226.70M594.42,226.70L594.00,226.41M594.00,226.41L593.65,226.09M593.65,226.09L593.40,225.74M593.40,225.74L593.25,225.38M593.25,225.38L593.20,225.00M641.11,238.65L641.05,239.03M641.05,239.03L640.90,239.39M640.90,239.39L640.65,239.74M640.65,239.74L640.31,240.06M640.31,240.06L639.89,240.35M639.89,240.35L611.05,257.00M611.05,257.00L609.05,258.35M609.05,258.35L607.44,259.86M607.44,259.86L606.27,261.50M606.27,261.50L605.55,263.23M605.55,263.23L605.31,265.00M830.51,348.00L830.45,348.38M830.45,348.38L830.30,348.74M830.30,348.74L830.05,349.09M830.05,349.09L829.71,349.41M829.71,349.41L829.29,349.70M829.29,349.70L821.32,354.30M821.32,354.30L820.82,354.55M820.82,354.55L820.26,354.74M820.26,354.74L819.66,354.89M819.66,354.89L819.03,354.97M819.03,354.97L818.37,355.00M818.37,355.00L817.72,354.97M817.72,354.97L817.09,354.89M817.09,354.89L816.48,354.74M816.48,354.74L815.93,354.55M815.93,354.55L815.43,354.30M815.43,354.30L805.38,348.50M805.38,348.50L805.24,348.43M805.24,348.43L805.07,348.37M805.07,348.37L804.90,348.33M804.90,348.33L804.71,348.30M804.71,348.30L804.52,348.29M804.52,348.29L804.33,348.30M804.33,348.30L804.14,348.33M804.14,348.33L803.96,348.37M803.96,348.37L803.80,348.43M803.80,348.43L803.65,348.50M803.65,348.50L736.53,387.25M736.53,387.25L736.41,387.33M736.41,387.33L736.31,387.43M736.31,387.43L736.24,387.53M736.24,387.53L736.19,387.64M736.19,387.64L736.18,387.75M901.17,473.30L901.12,473.68M901.12,473.68L900.97,474.04M900.97,474.04L900.72,474.39M900.72,474.39L900.38,474.71M900.38,474.71L899.95,475.00M899.95,475.00L883.19,484.68M883.19,484.68L883.05,484.75M883.05,484.75L882.89,484.81M882.89,484.81L882.72,484.85M882.72,484.85L882.54,484.87M882.54,484.87L882.35,484.89M882.35,484.89L882.16,484.88M882.16,484.88L878.25,484.58M878.25,484.58L873.70,484.56M873.70,484.56L869.18,484.87M869.18,484.87L864.75,485.48M864.75,485.48L860.49,486.40M860.49,486.40L856.45,487.62M856.45,487.62L852.70,489.11M852.70,489.11L849.29,490.85M849.29,490.85L846.27,492.82M846.27,492.82L843.69,494.98M843.69,494.98L841.59,497.31M841.59,497.31L839.99,499.78M839.99,499.78L838.93,502.33M838.93,502.33L838.40,504.94M838.96,509.94L838.94,510.04M838.94,510.04L838.90,510.15M838.90,510.15L838.82,510.25M838.82,510.25L838.72,510.34M838.72,510.34L838.60,510.42M838.60,510.42L821.84,520.10M821.84,520.10L821.34,520.35M821.34,520.35L820.78,520.54M820.78,520.54L820.18,520.69M820.18,520.69L819.55,520.77M819.55,520.77L818.89,520.80M818.89,520.80L818.24,520.77M818.24,520.77L817.61,520.69M817.61,520.69L817.00,520.54M817.00,520.54L816.45,520.35M816.45,520.35L815.95,520.10M815.95,520.10L717.66,463.35M717.66,463.35L717.52,463.28M717.52,463.28L717.36,463.23M717.36,463.23L717.19,463.18M717.19,463.18L717.00,463.16M717.00,463.16L716.82,463.15M716.82,463.15L716.63,463.15M716.63,463.15L716.44,463.18M716.44,463.18L716.27,463.22M716.27,463.22L688.47,470.87M688.47,470.87L687.81,471.10M687.81,471.10L687.22,471.37M687.22,471.37L686.70,471.70M686.70,471.70L686.29,472.07M686.29,472.07L685.97,472.47M685.97,472.47L685.77,472.89M685.77,472.89L685.68,473.33M686.24,476.68L685.77,479.10M685.77,479.10L684.50,481.43M684.50,481.43L682.46,483.57M682.46,483.57L679.75,485.43M679.75,485.43L676.46,486.96M676.46,486.96L672.72,488.10M672.72,488.10L668.67,488.79M668.67,488.79L664.46,489.02M664.46,489.02L660.26,488.77M660.26,488.77L656.22,488.05M656.22,488.05L652.50,486.90M652.50,486.90L649.24,485.35M649.24,485.35L602.89,458.59M602.89,458.59L602.48,458.32M602.48,458.32L602.15,458.01M602.15,458.01L601.90,457.68M601.90,457.68L601.74,457.33M601.74,457.33L601.68,456.97M634.06,434.36L634.04,434.25M634.04,434.25L634.00,434.15M634.00,434.15L633.92,434.05M633.92,434.05L633.83,433.96M633.83,433.96L633.71,433.88M633.71,433.88L456.58,331.62M456.58,331.62L456.44,331.55M456.44,331.55L456.28,331.49M456.28,331.49L456.12,331.45M456.12,331.45L455.94,331.42M455.94,331.42L455.75,331.41M455.75,331.41L455.57,331.42M455.57,331.42L455.39,331.44M455.39,331.44L455.22,331.47M455.22,331.47L455.05,331.52M455.05,331.52L454.91,331.59M454.91,331.59L419.47,349.52M419.47,349.52L418.97,349.73M418.97,349.73L418.42,349.90M418.42,349.90L417.83,350.03M417.83,350.03L417.21,350.10M417.21,350.10L416.59,350.11M416.59,350.11L415.97,350.07M415.97,350.07L415.36,349.98M415.36,349.98L414.79,349.84M414.79,349.84L414.26,349.64M414.26,349.64L413.78,349.41M413.78,349.41L367.43,322.65M367.43,322.65L364.75,320.77M364.75,320.77L362.76,318.62M362.76,318.62L361.52,316.29M361.52,316.29L361.09,313.86M405.89,283.64L405.88,283.53M405.88,283.53L405.83,283.42M405.83,283.42L405.76,283.32M405.76,283.32L405.66,283.23M405.66,283.23L405.53,283.15M405.53,283.15L307.25,226.40M480.45,258.95L480.29,257.09M480.29,257.09L479.82,255.25M479.82,255.25L479.04,253.45M479.04,253.45L477.95,251.70M477.95,251.70L476.58,250.02M476.58,250.02L474.92,248.42M474.92,248.42L473.00,246.93M473.00,246.93L470.84,245.55M470.84,245.55L468.45,244.30M468.45,244.30L465.86,243.19M465.86,243.19L463.10,242.24M463.10,242.24L460.19,241.44M460.19,241.44L457.16,240.82M457.16,240.82L454.03,240.36M454.03,240.36L450.85,240.09M450.85,240.09L447.63,240.00M447.63,240.00L444.41,240.09M444.41,240.09L441.23,240.36M441.23,240.36L438.10,240.82M438.10,240.82L435.07,241.44M435.07,241.44L432.16,242.24M432.16,242.24L429.39,243.19M429.39,243.19L426.81,244.30M426.81,244.30L424.42,245.55M424.42,245.55L422.26,246.93M422.26,246.93L420.34,248.42M420.34,248.42L418.68,250.02M418.68,250.02L417.30,251.70M417.30,251.70L416.22,253.45M416.22,253.45L415.44,255.25M415.44,255.25L414.96,257.09M414.96,257.09L414.81,258.95M393.66,313.80L393.53,312.82M393.53,312.82L393.13,311.86M393.13,311.86L392.48,310.94M392.48,310.94L391.58,310.10M391.58,310.10L390.47,309.35M390.47,309.35L389.17,308.71M389.17,308.71L387.71,308.19M387.71,308.19L386.13,307.81M386.13,307.81L384.47,307.58M384.47,307.58L382.76,307.51M382.76,307.51L381.06,307.58M381.06,307.58L379.40,307.81M379.40,307.81L377.82,308.19M377.82,308.19L376.36,308.71M376.36,308.71L375.06,309.35M375.06,309.35L373.95,310.10M373.95,310.10L373.05,310.94M373.05,310.94L372.40,311.86M372.40,311.86L372.00,312.82M372.00,312.82L371.86,313.80M519.48,294.00L519.35,292.99M519.35,292.99L518.94,292.01M518.94,292.01L518.27,291.08M518.27,291.08L517.35,290.22M517.35,290.22L516.22,289.45M516.22,289.45L514.89,288.79M514.89,288.79L513.40,288.27M513.40,288.27L511.78,287.88M511.78,287.88L510.08,287.64M510.08,287.64L508.34,287.57M508.34,287.57L506.59,287.64M506.59,287.64L504.89,287.88M504.89,287.88L503.28,288.27M503.28,288.27L501.79,288.79M501.79,288.79L500.46,289.45M500.46,289.45L499.32,290.22M499.32,290.22L498.41,291.08M498.41,291.08L497.74,292.01M497.74,292.01L497.33,292.99M497.33,292.99L497.19,294.00M423.57,211.50L423.40,210.79M423.40,210.79L422.93,210.12M422.93,210.12L422.17,209.55M422.17,209.55L421.18,209.11M421.18,209.11L420.03,208.84M420.03,208.84L418.79,208.74M418.79,208.74L417.55,208.84M417.55,208.84L416.40,209.11M416.40,209.11L415.41,209.55M415.41,209.55L414.65,210.12M414.65,210.12L414.18,210.79M414.18,210.79L414.01,211.50M370.22,242.30L370.06,241.59M370.06,241.59L369.58,240.92M369.58,240.92L368.82,240.35M368.82,240.35L367.83,239.91M367.83,239.91L366.68,239.64M366.68,239.64L365.44,239.54M365.44,239.54L364.21,239.64M364.21,239.64L363.05,239.91M363.05,239.91L362.07,240.35M362.07,240.35L361.31,240.92M361.31,240.92L360.83,241.59M360.83,241.59L360.67,242.30M482.80,241.50L482.64,240.79M482.64,240.79L482.16,240.12M482.16,240.12L481.40,239.55M481.40,239.55L480.41,239.11M480.41,239.11L479.26,238.84M479.26,238.84L478.03,238.74M478.03,238.74L476.79,238.84M476.79,238.84L475.64,239.11M475.64,239.11L474.65,239.55M474.65,239.55L473.89,240.12M473.89,240.12L473.41,240.79M473.41,240.79L473.25,241.50M422.18,276.50L422.02,275.79M422.02,275.79L421.54,275.12M421.54,275.12L420.78,274.55M420.78,274.55L419.79,274.11M419.79,274.11L418.64,273.84M418.64,273.84L417.40,273.74M417.40,273.74L416.17,273.84M416.17,273.84L415.02,274.11M415.02,274.11L414.03,274.55M414.03,274.55L413.27,275.12M413.27,275.12L412.79,275.79M412.79,275.79L412.63,276.50M540.05,278.85L539.88,278.14M539.88,278.14L539.41,277.47M539.41,277.47L538.65,276.90M538.65,276.90L537.66,276.46M537.66,276.46L536.51,276.19M536.51,276.19L535.27,276.09M535.27,276.09L534.03,276.19M534.03,276.19L532.88,276.46M532.88,276.46L531.89,276.90M531.89,276.90L531.13,277.47M531.13,277.47L530.66,278.14M530.66,278.14L530.49,278.85M486.87,309.55L486.71,308.84M486.71,308.84L486.23,308.17M486.23,308.17L485.47,307.60M485.47,307.60L484.48,307.16M484.48,307.16L483.33,306.89M483.33,306.89L482.10,306.79M482.10,306.79L480.86,306.89M480.86,306.89L479.71,307.16M479.71,307.16L478.72,307.60M478.72,307.60L477.96,308.17M477.96,308.17L477.48,308.84M477.48,308.84L477.32,309.55M502.97,268.70L527.56,282.90M527.56,282.90L529.91,284.44M529.91,284.44L531.88,286.15M531.88,286.15L533.46,287.99M533.46,287.99L534.60,289.94M534.60,289.94L535.29,291.95M535.29,291.95L535.53,294.00M464.52,290.90L468.76,288.45M468.76,288.45L493.36,302.65M493.36,302.65L495.88,303.90M495.88,303.90L498.72,304.90M498.72,304.90L501.79,305.63M501.79,305.63L505.02,306.08M505.02,306.08L508.34,306.23M508.34,306.23L511.65,306.08M511.65,306.08L514.88,305.63M514.88,305.63L517.96,304.90M517.96,304.90L520.79,303.90M520.79,303.90L523.32,302.65M523.32,302.65L525.48,301.19M525.48,301.19L527.22,299.55M527.22,299.55L528.49,297.78M528.49,297.78L529.26,295.91M529.26,295.91L529.53,294.00M498.72,271.15L502.97,268.70M792.39,439.05L792.24,437.19M792.24,437.19L791.76,435.35M791.76,435.35L790.98,433.55M790.98,433.55L789.90,431.80M789.90,431.80L788.52,430.12M788.52,430.12L786.86,428.52M786.86,428.52L784.94,427.03M784.94,427.03L782.78,425.65M782.78,425.65L780.39,424.40M780.39,424.40L777.81,423.29M777.81,423.29L775.04,422.34M775.04,422.34L772.13,421.54M772.13,421.54L769.10,420.92M769.10,420.92L765.97,420.46M765.97,420.46L762.79,420.19M762.79,420.19L759.57,420.10M759.57,420.10L756.35,420.19M756.35,420.19L753.17,420.46M753.17,420.46L750.04,420.92M750.04,420.92L747.01,421.54M747.01,421.54L744.10,422.34M744.10,422.34L741.34,423.29M741.34,423.29L738.75,424.40M738.75,424.40L736.36,425.65M736.36,425.65L734.20,427.03M734.20,427.03L732.28,428.52M732.28,428.52L730.62,430.12M730.62,430.12L729.25,431.80M729.25,431.80L728.16,433.55M728.16,433.55L727.38,435.35M727.38,435.35L726.91,437.19M726.91,437.19L726.75,439.05M675.47,476.50L675.33,475.52M675.33,475.52L674.93,474.56M674.93,474.56L674.28,473.64M674.28,473.64L673.39,472.80M673.39,472.80L672.28,472.05M672.28,472.05L670.98,471.41M670.98,471.41L669.52,470.89M669.52,470.89L667.94,470.51M667.94,470.51L666.27,470.28M666.27,470.28L664.57,470.21M664.57,470.21L662.86,470.28M662.86,470.28L661.20,470.51M661.20,470.51L659.62,470.89M659.62,470.89L658.16,471.41M658.16,471.41L656.86,472.05M656.86,472.05L655.75,472.80M655.75,472.80L654.86,473.64M654.86,473.64L654.20,474.56M654.20,474.56L653.80,475.52M653.80,475.52L653.67,476.50M710.01,404.00L709.87,402.99M709.87,402.99L709.46,402.01M709.46,402.01L708.79,401.08M708.79,401.08L707.88,400.22M707.88,400.22L706.74,399.45M706.74,399.45L705.41,398.79M705.41,398.79L703.92,398.27M703.92,398.27L702.31,397.88M702.31,397.88L700.61,397.64M700.61,397.64L698.86,397.57M698.86,397.57L697.12,397.64M697.12,397.64L695.42,397.88M695.42,397.88L693.80,398.27M693.80,398.27L692.31,398.79M692.31,398.79L690.98,399.45M690.98,399.45L689.85,400.22M689.85,400.22L688.93,401.08M688.93,401.08L688.26,402.01M688.26,402.01L687.85,402.99M687.85,402.99L687.72,404.00M846.53,455.70L846.37,454.99M846.37,454.99L845.89,454.32M845.89,454.32L845.13,453.75M845.13,453.75L844.15,453.31M844.15,453.31L842.99,453.04M842.99,453.04L841.76,452.94M841.76,452.94L840.52,453.04M840.52,453.04L839.37,453.31M839.37,453.31L838.38,453.75M838.38,453.75L837.62,454.32M837.62,454.32L837.14,454.99M837.14,454.99L836.98,455.70M793.19,486.50L793.02,485.79M793.02,485.79L792.55,485.12M792.55,485.12L791.79,484.55M791.79,484.55L790.80,484.11M790.80,484.11L789.65,483.84M789.65,483.84L788.41,483.74M788.41,483.74L787.17,483.84M787.17,483.84L786.02,484.11M786.02,484.11L785.03,484.55M785.03,484.55L784.27,485.12M784.27,485.12L783.80,485.79M783.80,485.79L783.63,486.50M794.57,421.50L794.41,420.79M794.41,420.79L793.93,420.12M793.93,420.12L793.17,419.55M793.17,419.55L792.18,419.11M792.18,419.11L791.03,418.84M791.03,418.84L789.80,418.74M789.80,418.74L788.56,418.84M788.56,418.84L787.41,419.11M787.41,419.11L786.42,419.55M786.42,419.55L785.66,420.12M785.66,420.12L785.18,420.79M785.18,420.79L785.02,421.50M733.95,456.50L733.79,455.79M733.79,455.79L733.31,455.12M733.31,455.12L732.55,454.55M732.55,454.55L731.56,454.11M731.56,454.11L730.41,453.84M730.41,453.84L729.17,453.74M729.17,453.74L727.94,453.84M727.94,453.84L726.79,454.11M726.79,454.11L725.80,454.55M725.80,454.55L725.04,455.12M725.04,455.12L724.56,455.79M724.56,455.79L724.40,456.50M729.88,388.45L729.72,387.74M729.72,387.74L729.24,387.07M729.24,387.07L728.48,386.50M728.48,386.50L727.49,386.06M727.49,386.06L726.34,385.79M726.34,385.79L725.10,385.69M725.10,385.69L723.87,385.79M723.87,385.79L722.72,386.06M722.72,386.06L721.73,386.50M721.73,386.50L720.97,387.07M720.97,387.07L720.49,387.74M720.49,387.74L720.33,388.45M676.71,419.15L676.54,418.44M676.54,418.44L676.07,417.77M676.07,417.77L675.31,417.20M675.31,417.20L674.32,416.76M674.32,416.76L673.17,416.49M673.17,416.49L671.93,416.39M671.93,416.39L670.69,416.49M670.69,416.49L669.54,416.76M669.54,416.76L668.55,417.20M668.55,417.20L667.79,417.77M667.79,417.77L667.32,418.44M667.32,418.44L667.15,419.15M742.68,407.10L718.09,392.90M718.09,392.90L715.41,391.55M715.41,391.55L712.46,390.41M712.46,390.41L709.27,389.50M709.27,389.50L705.90,388.84M705.90,388.84L702.41,388.44M702.41,388.44L698.86,388.30M698.86,388.30L695.31,388.44M695.31,388.44L691.83,388.84M691.83,388.84L688.46,389.50M688.46,389.50L685.27,390.41M685.27,390.41L682.31,391.55M682.31,391.55L679.64,392.90M679.64,392.90L677.29,394.44M677.29,394.44L675.32,396.15M675.32,396.15L673.74,397.99M673.74,397.99L672.60,399.94M672.60,399.94L671.91,401.95M671.91,401.95L671.67,404.00M708.48,426.85L683.88,412.65M683.88,412.65L681.72,411.19M681.72,411.19L679.98,409.55M679.98,409.55L678.71,407.78M678.71,407.78L677.94,405.91M677.94,405.91L677.67,404.00M557.01,344.20L556.63,344.45M556.63,344.45L556.33,344.74M556.33,344.74L556.11,345.04M556.11,345.04L555.98,345.37M555.98,345.37L555.93,345.70M651.10,352.40L651.05,352.07M651.05,352.07L650.92,351.74M650.92,351.74L650.69,351.44M650.69,351.44L650.39,351.15M650.39,351.15L650.02,350.90M650.02,350.90L600.31,322.20M600.31,322.20L599.87,321.98M599.87,321.98L599.38,321.81M599.38,321.81L598.85,321.68M598.85,321.68L598.29,321.60M598.29,321.60L597.71,321.58M597.71,321.58L597.14,321.60M597.14,321.60L596.58,321.68M596.58,321.68L596.04,321.81M596.04,321.81L595.55,321.98M595.55,321.98L595.11,322.20M595.11,322.20L557.01,344.20"/>
<path fill="none" stroke="#3d3d3d" stroke-width="0.7" d="M307.25,221.60v4.80M306.03,219.90v4.80M368.76,185.63v4.80M368.24,183.26v4.80M525.08,250.60v4.80M524.79,251.00v4.80M516.65,255.70v4.80M516.36,256.10v4.80M604.82,228.20v4.80M604.47,227.70v4.80M594.42,221.90v4.80M593.20,220.20v4.80M641.11,233.85v4.80M639.89,235.55v4.80M611.05,252.20v4.80M605.31,260.20v4.80M830.51,343.20v4.80M829.29,344.90v4.80M821.32,349.50v4.80M815.43,349.50v4.80M805.38,343.70v4.80M803.65,343.70v4.80M736.53,382.45v4.80M736.18,382.95v4.80M901.17,468.50v4.80M899.95,470.20v4.80M883.19,479.88v4.80M838.40,500.14v4.80M838.96,505.14v4.80M838.60,505.62v4.80M821.84,515.30v4.80M815.95,515.30v4.80M717.66,458.55v4.80M716.27,458.42v4.80M688.47,466.07v4.80M685.68,468.53v4.80M686.24,471.88v4.80M649.24,480.55v4.80M602.89,453.79v4.80M601.68,452.17v4.80M634.06,429.56v4.80M633.71,429.08v4.80M456.58,326.82v4.80M454.91,326.79v4.80M419.47,344.72v4.80M413.78,344.61v4.80M367.43,317.85v4.80M361.09,309.06v4.80M405.89,278.84v4.80M405.53,278.35v4.80M480.45,254.15v4.80M414.81,254.15v4.80M393.66,309.00v4.80M371.86,309.00v4.80M519.48,289.20v4.80M497.19,289.20v4.80M423.57,206.70v4.80M414.01,206.70v4.80M370.22,237.50v4.80M360.67,237.50v4.80M482.80,236.70v4.80M473.25,236.70v4.80M422.18,271.70v4.80M412.63,271.70v4.80M540.05,274.05v4.80M530.49,274.05v4.80M486.87,304.75v4.80M477.32,304.75v4.80M527.56,278.10v4.80M535.53,289.20v4.80M464.52,286.10v4.80M493.36,297.85v4.80M529.53,289.20v4.80M498.72,266.35v4.80M792.39,434.25v4.80M726.75,434.25v4.80M675.47,471.70v4.80M653.67,471.70v4.80M710.01,399.20v4.80M687.72,399.20v4.80M846.53,450.90v4.80M836.98,450.90v4.80M793.19,481.70v4.80M783.63,481.70v4.80M794.57,416.70v4.80M785.02,416.70v4.80M733.95,451.70v4.80M724.40,451.70v4.80M729.88,383.65v4.80M720.33,383.65v4.80M676.71,414.35v4.80M667.15,414.35v4.80M742.68,402.30v4.80M718.09,388.10v4.80M671.67,399.20v4.80M708.48,422.05v4.80M683.88,407.85v4.80M677.67,399.20v4.80M557.01,339.40v4.80M555.93,340.90v4.80M651.10,347.60v4.80M650.02,346.10v4.80M600.31,317.40v4.80M595.11,317.40v4.80"/>
<path fill="#b5a99f" stroke="#383838" stroke-width="1.0" fill-rule="evenodd" stroke-linejoin="round" d="M307.25,221.60 L306.82,221.31 L306.48,220.99 L306.23,220.64 L306.08,220.28 L306.03,219.90 L306.08,219.52 L306.23,219.16 L306.48,218.81 L306.82,218.49 L307.25,218.20 L324.01,208.52 L324.15,208.45 L324.31,208.39 L324.48,208.35 L324.66,208.33 L324.85,208.31 L325.04,208.32 L328.95,208.62 L333.50,208.64 L338.02,208.33 L342.45,207.72 L346.71,206.80 L350.75,205.58 L354.50,204.09 L357.91,202.35 L360.93,200.38 L363.51,198.22 L365.61,195.89 L367.21,193.42 L368.27,190.87 L368.80,188.26 L368.76,185.63 L368.25,183.37 L368.24,183.26 L368.26,183.16 L368.30,183.05 L368.38,182.95 L368.48,182.86 L368.60,182.78 L385.36,173.10 L385.86,172.85 L386.42,172.66 L387.02,172.51 L387.65,172.43 L388.31,172.40 L388.96,172.43 L389.59,172.51 L390.20,172.66 L390.75,172.85 L391.25,173.10 L524.79,250.20 L524.89,250.27 L524.97,250.34 L525.03,250.43 L525.07,250.51 L525.08,250.60 L525.07,250.69 L525.03,250.77 L524.97,250.86 L524.89,250.93 L524.79,251.00 L516.65,255.70 L516.55,255.77 L516.47,255.84 L516.41,255.93 L516.38,256.01 L516.36,256.10 L516.38,256.19 L516.41,256.27 L516.47,256.36 L516.55,256.43 L516.65,256.50 L535.62,267.45 L535.76,267.52 L535.93,267.58 L536.10,267.62 L536.29,267.65 L536.48,267.66 L536.67,267.65 L536.86,267.62 L537.04,267.58 L537.20,267.52 L537.35,267.45 L604.47,228.70 L604.59,228.62 L604.69,228.52 L604.76,228.42 L604.81,228.31 L604.82,228.20 L604.81,228.09 L604.76,227.98 L604.69,227.88 L604.59,227.78 L604.47,227.70 L594.42,221.90 L594.00,221.61 L593.65,221.29 L593.40,220.94 L593.25,220.58 L593.20,220.20 L593.25,219.82 L593.40,219.46 L593.65,219.11 L594.00,218.79 L594.42,218.50 L602.39,213.90 L602.88,213.65 L603.44,213.46 L604.05,213.31 L604.68,213.23 L605.33,213.20 L605.98,213.23 L606.62,213.31 L607.22,213.46 L607.78,213.65 L608.28,213.90 L639.89,232.15 L640.31,232.44 L640.65,232.76 L640.90,233.11 L641.05,233.47 L641.11,233.85 L641.05,234.23 L640.90,234.59 L640.65,234.94 L640.31,235.26 L639.89,235.55 L611.05,252.20 L609.05,253.55 L607.44,255.06 L606.27,256.70 L605.55,258.43 L605.31,260.20 L605.55,261.97 L606.27,263.70 L607.44,265.34 L609.05,266.85 L611.05,268.20 L735.24,339.90 L737.57,341.05 L740.20,341.98 L743.04,342.66 L746.03,343.07 L749.09,343.21 L752.16,343.07 L755.15,342.66 L757.99,341.98 L760.61,341.05 L762.95,339.90 L791.79,323.25 L792.28,323.00 L792.84,322.81 L793.44,322.66 L794.08,322.58 L794.73,322.55 L795.38,322.58 L796.02,322.66 L796.62,322.81 L797.18,323.00 L797.68,323.25 L829.29,341.50 L829.71,341.79 L830.05,342.11 L830.30,342.46 L830.45,342.82 L830.51,343.20 L830.45,343.58 L830.30,343.94 L830.05,344.29 L829.71,344.61 L829.29,344.90 L821.32,349.50 L820.82,349.75 L820.26,349.94 L819.66,350.09 L819.03,350.17 L818.37,350.20 L817.72,350.17 L817.09,350.09 L816.48,349.94 L815.93,349.75 L815.43,349.50 L805.38,343.70 L805.24,343.63 L805.07,343.57 L804.90,343.53 L804.71,343.50 L804.52,343.49 L804.33,343.50 L804.14,343.53 L803.96,343.57 L803.80,343.63 L803.65,343.70 L736.53,382.45 L736.41,382.53 L736.31,382.63 L736.24,382.73 L736.19,382.84 L736.18,382.95 L736.19,383.06 L736.24,383.17 L736.31,383.27 L736.41,383.37 L736.53,383.45 L755.50,394.40 L755.62,394.46 L755.75,394.50 L755.89,394.54 L756.04,394.56 L756.19,394.57 L756.35,394.56 L756.50,394.54 L756.64,394.50 L756.77,394.46 L756.89,394.40 L765.03,389.70 L765.14,389.64 L765.28,389.60 L765.42,389.56 L765.57,389.54 L765.72,389.53 L765.87,389.54 L766.02,389.56 L766.16,389.60 L766.30,389.64 L766.41,389.70 L899.95,466.80 L900.38,467.09 L900.72,467.41 L900.97,467.76 L901.12,468.12 L901.17,468.50 L901.12,468.88 L900.97,469.24 L900.72,469.59 L900.38,469.91 L899.95,470.20 L883.19,479.88 L883.05,479.95 L882.89,480.01 L882.72,480.05 L882.54,480.07 L882.35,480.09 L882.16,480.08 L878.25,479.78 L873.70,479.76 L869.18,480.07 L864.75,480.68 L860.49,481.60 L856.45,482.82 L852.70,484.31 L849.29,486.05 L846.27,488.02 L843.69,490.18 L841.59,492.51 L839.99,494.98 L838.93,497.53 L838.40,500.14 L838.44,502.77 L838.95,505.03 L838.96,505.14 L838.94,505.24 L838.90,505.35 L838.82,505.45 L838.72,505.54 L838.60,505.62 L821.84,515.30 L821.34,515.55 L820.78,515.74 L820.18,515.89 L819.55,515.97 L818.89,516.00 L818.24,515.97 L817.61,515.89 L817.00,515.74 L816.45,515.55 L815.95,515.30 L717.66,458.55 L717.52,458.48 L717.36,458.43 L717.19,458.38 L717.00,458.36 L716.82,458.35 L716.63,458.35 L716.44,458.38 L716.27,458.42 L688.47,466.07 L687.81,466.30 L687.22,466.57 L686.70,466.90 L686.29,467.27 L685.97,467.67 L685.77,468.09 L685.68,468.53 L685.72,468.97 L685.87,469.40 L685.89,469.45 L686.24,471.88 L685.77,474.30 L684.50,476.63 L682.46,478.77 L679.75,480.63 L676.46,482.16 L672.72,483.30 L668.67,483.99 L664.46,484.22 L660.26,483.97 L656.22,483.25 L652.50,482.10 L649.24,480.55 L602.89,453.79 L602.48,453.52 L602.15,453.21 L601.90,452.88 L601.74,452.53 L601.68,452.17 L601.70,451.81 L601.82,451.45 L602.03,451.11 L602.33,450.80 L602.71,450.51 L633.76,430.05 L633.87,429.96 L633.96,429.87 L634.02,429.77 L634.06,429.66 L634.06,429.56 L634.04,429.45 L634.00,429.35 L633.92,429.25 L633.83,429.16 L633.71,429.08 L456.58,326.82 L456.44,326.75 L456.28,326.69 L456.12,326.65 L455.94,326.62 L455.75,326.61 L455.57,326.62 L455.39,326.64 L455.22,326.67 L455.05,326.72 L454.91,326.79 L419.47,344.72 L418.97,344.93 L418.42,345.10 L417.83,345.23 L417.21,345.30 L416.59,345.31 L415.97,345.27 L415.36,345.18 L414.79,345.04 L414.26,344.84 L413.78,344.61 L367.43,317.85 L364.75,315.97 L362.76,313.82 L361.52,311.49 L361.09,309.06 L361.48,306.63 L362.68,304.29 L364.64,302.13 L367.29,300.24 L370.53,298.67 L374.23,297.50 L378.25,296.76 L382.45,296.49 L386.66,296.69 L386.74,296.70 L387.49,296.79 L388.25,296.81 L389.01,296.76 L389.74,296.64 L390.44,296.46 L391.08,296.22 L391.65,295.92 L392.13,295.58 L392.51,295.20 L405.77,279.15 L405.84,279.05 L405.88,278.94 L405.89,278.84 L405.88,278.73 L405.83,278.62 L405.76,278.52 L405.66,278.43 L405.53,278.35ZM470.84,267.55 L473.00,266.17 L474.92,264.68 L476.58,263.08 L477.95,261.40 L479.04,259.65 L479.82,257.85 L480.29,256.01 L480.45,254.15 L480.29,252.29 L479.82,250.45 L479.04,248.65 L477.95,246.90 L476.58,245.22 L474.92,243.62 L473.00,242.13 L470.84,240.75 L468.45,239.50 L465.86,238.39 L463.10,237.44 L460.19,236.64 L457.16,236.02 L454.03,235.56 L450.85,235.29 L447.63,235.20 L444.41,235.29 L441.23,235.56 L438.10,236.02 L435.07,236.64 L432.16,237.44 L429.39,238.39 L426.81,239.50 L424.42,240.75 L422.26,242.13 L420.34,243.62 L418.68,245.22 L417.30,246.90 L416.22,248.65 L415.44,250.45 L414.96,252.29 L414.81,254.15 L414.96,256.01 L415.44,257.85 L416.22,259.65 L417.30,261.40 L418.68,263.08 L420.34,264.68 L422.26,266.17 L424.42,267.55 L426.81,268.80 L429.39,269.91 L432.16,270.86 L435.07,271.66 L438.10,272.28 L441.23,272.74 L444.41,273.01 L447.63,273.10 L450.85,273.01 L454.03,272.74 L457.16,272.28 L460.19,271.66 L463.10,270.86 L465.86,269.91 L468.45,268.80ZM390.47,313.45 L391.58,312.70 L392.48,311.86 L393.13,310.94 L393.53,309.98 L393.66,309.00 L393.53,308.02 L393.13,307.06 L392.48,306.14 L391.58,305.30 L390.47,304.55 L389.17,303.91 L387.71,303.39 L386.13,303.01 L384.47,302.78 L382.76,302.71 L381.06,302.78 L379.40,303.01 L377.82,303.39 L376.36,303.91 L375.06,304.55 L373.95,305.30 L373.05,306.14 L372.40,307.06 L372.00,308.02 L371.86,309.00 L372.00,309.98 L372.40,310.94 L373.05,311.86 L373.95,312.70 L375.06,313.45 L376.36,314.09 L377.82,314.61 L379.40,314.99 L381.06,315.22 L382.76,315.29 L384.47,315.22 L386.13,314.99 L387.71,314.61 L389.17,314.09ZM516.22,293.75 L517.35,292.98 L518.27,292.12 L518.94,291.19 L519.35,290.21 L519.48,289.20 L519.35,288.19 L518.94,287.21 L518.27,286.28 L517.35,285.42 L516.22,284.65 L514.89,283.99 L513.40,283.47 L511.78,283.08 L510.08,282.84 L508.34,282.77 L506.59,282.84 L504.89,283.08 L503.28,283.47 L501.79,283.99 L500.46,284.65 L499.32,285.42 L498.41,286.28 L497.74,287.21 L497.33,288.19 L497.19,289.20 L497.33,290.21 L497.74,291.19 L498.41,292.12 L499.32,292.98 L500.46,293.75 L501.79,294.41 L503.28,294.93 L504.89,295.32 L506.59,295.56 L508.34,295.63 L510.08,295.56 L511.78,295.32 L513.40,294.93 L514.89,294.41ZM422.17,208.65 L422.93,208.08 L423.40,207.41 L423.57,206.70 L423.40,205.99 L422.93,205.32 L422.17,204.75 L421.18,204.31 L420.03,204.04 L418.79,203.94 L417.55,204.04 L416.40,204.31 L415.41,204.75 L414.65,205.32 L414.18,205.99 L414.01,206.70 L414.18,207.41 L414.65,208.08 L415.41,208.65 L416.40,209.09 L417.55,209.36 L418.79,209.46 L420.03,209.36 L421.18,209.09ZM368.82,239.45 L369.58,238.88 L370.06,238.21 L370.22,237.50 L370.06,236.79 L369.58,236.12 L368.82,235.55 L367.83,235.11 L366.68,234.84 L365.44,234.74 L364.21,234.84 L363.05,235.11 L362.07,235.55 L361.31,236.12 L360.83,236.79 L360.67,237.50 L360.83,238.21 L361.31,238.88 L362.07,239.45 L363.05,239.89 L364.21,240.16 L365.44,240.26 L366.68,240.16 L367.83,239.89ZM481.40,238.65 L482.16,238.08 L482.64,237.41 L482.80,236.70 L482.64,235.99 L482.16,235.32 L481.40,234.75 L480.41,234.31 L479.26,234.04 L478.03,233.94 L476.79,234.04 L475.64,234.31 L474.65,234.75 L473.89,235.32 L473.41,235.99 L473.25,236.70 L473.41,237.41 L473.89,238.08 L474.65,238.65 L475.64,239.09 L476.79,239.36 L478.03,239.46 L479.26,239.36 L480.41,239.09ZM420.78,273.65 L421.54,273.08 L422.02,272.41 L422.18,271.70 L422.02,270.99 L421.54,270.32 L420.78,269.75 L419.79,269.31 L418.64,269.04 L417.40,268.94 L416.17,269.04 L415.02,269.31 L414.03,269.75 L413.27,270.32 L412.79,270.99 L412.63,271.70 L412.79,272.41 L413.27,273.08 L414.03,273.65 L415.02,274.09 L416.17,274.36 L417.40,274.46 L418.64,274.36 L419.79,274.09ZM538.65,276.00 L539.41,275.43 L539.88,274.76 L540.05,274.05 L539.88,273.34 L539.41,272.67 L538.65,272.10 L537.66,271.66 L536.51,271.39 L535.27,271.29 L534.03,271.39 L532.88,271.66 L531.89,272.10 L531.13,272.67 L530.66,273.34 L530.49,274.05 L530.66,274.76 L531.13,275.43 L531.89,276.00 L532.88,276.44 L534.03,276.71 L535.27,276.81 L536.51,276.71 L537.66,276.44ZM485.47,306.70 L486.23,306.13 L486.71,305.46 L486.87,304.75 L486.71,304.04 L486.23,303.37 L485.47,302.80 L484.48,302.36 L483.33,302.09 L482.10,301.99 L480.86,302.09 L479.71,302.36 L478.72,302.80 L477.96,303.37 L477.48,304.04 L477.32,304.75 L477.48,305.46 L477.96,306.13 L478.72,306.70 L479.71,307.14 L480.86,307.41 L482.10,307.51 L483.33,307.41 L484.48,307.14ZM502.97,263.90 L527.56,278.10 L529.91,279.64 L531.88,281.35 L533.46,283.19 L534.60,285.14 L535.29,287.15 L535.53,289.20 L535.29,291.25 L534.60,293.26 L533.46,295.21 L531.88,297.05 L529.91,298.76 L527.56,300.30 L524.89,301.65 L521.93,302.79 L518.74,303.70 L515.37,304.36 L511.89,304.76 L508.34,304.90 L504.79,304.76 L501.30,304.36 L497.93,303.70 L494.74,302.79 L491.79,301.65 L489.11,300.30 L464.52,286.10 L468.76,283.65 L493.36,297.85 L495.88,299.10 L498.72,300.10 L501.79,300.83 L505.02,301.28 L508.34,301.43 L511.65,301.28 L514.88,300.83 L517.96,300.10 L520.79,299.10 L523.32,297.85 L525.48,296.39 L527.22,294.75 L528.49,292.98 L529.26,291.11 L529.53,289.20 L529.26,287.29 L528.49,285.42 L527.22,283.65 L525.48,282.01 L523.32,280.55 L498.72,266.35ZM782.78,447.65 L784.94,446.27 L786.86,444.78 L788.52,443.18 L789.90,441.50 L790.98,439.75 L791.76,437.95 L792.24,436.11 L792.39,434.25 L792.24,432.39 L791.76,430.55 L790.98,428.75 L789.90,427.00 L788.52,425.32 L786.86,423.72 L784.94,422.23 L782.78,420.85 L780.39,419.60 L777.81,418.49 L775.04,417.54 L772.13,416.74 L769.10,416.12 L765.97,415.66 L762.79,415.39 L759.57,415.30 L756.35,415.39 L753.17,415.66 L750.04,416.12 L747.01,416.74 L744.10,417.54 L741.34,418.49 L738.75,419.60 L736.36,420.85 L734.20,422.23 L732.28,423.72 L730.62,425.32 L729.25,427.00 L728.16,428.75 L727.38,430.55 L726.91,432.39 L726.75,434.25 L726.91,436.11 L727.38,437.95 L728.16,439.75 L729.25,441.50 L730.62,443.18 L732.28,444.78 L734.20,446.27 L736.36,447.65 L738.75,448.90 L741.34,450.01 L744.10,450.96 L747.01,451.76 L750.04,452.38 L753.17,452.84 L756.35,453.11 L759.57,453.20 L762.79,453.11 L765.97,452.84 L769.10,452.38 L772.13,451.76 L775.04,450.96 L777.81,450.01 L780.39,448.90ZM672.28,476.15 L673.39,475.40 L674.28,474.56 L674.93,473.64 L675.33,472.68 L675.47,471.70 L675.33,470.72 L674.93,469.76 L674.28,468.84 L673.39,468.00 L672.28,467.25 L670.98,466.61 L669.52,466.09 L667.94,465.71 L666.27,465.48 L664.57,465.41 L662.86,465.48 L661.20,465.71 L659.62,466.09 L658.16,466.61 L656.86,467.25 L655.75,468.00 L654.86,468.84 L654.20,469.76 L653.80,470.72 L653.67,471.70 L653.80,472.68 L654.20,473.64 L654.86,474.56 L655.75,475.40 L656.86,476.15 L658.16,476.79 L659.62,477.31 L661.20,477.69 L662.86,477.92 L664.57,477.99 L666.27,477.92 L667.94,477.69 L669.52,477.31 L670.98,476.79ZM706.74,403.75 L707.88,402.98 L708.79,402.12 L709.46,401.19 L709.87,400.21 L710.01,399.20 L709.87,398.19 L709.46,397.21 L708.79,396.28 L707.88,395.42 L706.74,394.65 L705.41,393.99 L703.92,393.47 L702.31,393.08 L700.61,392.84 L698.86,392.77 L697.12,392.84 L695.42,393.08 L693.80,393.47 L692.31,393.99 L690.98,394.65 L689.85,395.42 L688.93,396.28 L688.26,397.21 L687.85,398.19 L687.72,399.20 L687.85,400.21 L688.26,401.19 L688.93,402.12 L689.85,402.98 L690.98,403.75 L692.31,404.41 L693.80,404.93 L695.42,405.32 L697.12,405.56 L698.86,405.63 L700.61,405.56 L702.31,405.32 L703.92,404.93 L705.41,404.41ZM845.13,452.85 L845.89,452.28 L846.37,451.61 L846.53,450.90 L846.37,450.19 L845.89,449.52 L845.13,448.95 L844.15,448.51 L842.99,448.24 L841.76,448.14 L840.52,448.24 L839.37,448.51 L838.38,448.95 L837.62,449.52 L837.14,450.19 L836.98,450.90 L837.14,451.61 L837.62,452.28 L838.38,452.85 L839.37,453.29 L840.52,453.56 L841.76,453.66 L842.99,453.56 L844.15,453.29ZM791.79,483.65 L792.55,483.08 L793.02,482.41 L793.19,481.70 L793.02,480.99 L792.55,480.32 L791.79,479.75 L790.80,479.31 L789.65,479.04 L788.41,478.94 L787.17,479.04 L786.02,479.31 L785.03,479.75 L784.27,480.32 L783.80,480.99 L783.63,481.70 L783.80,482.41 L784.27,483.08 L785.03,483.65 L786.02,484.09 L787.17,484.36 L788.41,484.46 L789.65,484.36 L790.80,484.09ZM793.17,418.65 L793.93,418.08 L794.41,417.41 L794.57,416.70 L794.41,415.99 L793.93,415.32 L793.17,414.75 L792.18,414.31 L791.03,414.04 L789.80,413.94 L788.56,414.04 L787.41,414.31 L786.42,414.75 L785.66,415.32 L785.18,415.99 L785.02,416.70 L785.18,417.41 L785.66,418.08 L786.42,418.65 L787.41,419.09 L788.56,419.36 L789.80,419.46 L791.03,419.36 L792.18,419.09ZM732.55,453.65 L733.31,453.08 L733.79,452.41 L733.95,451.70 L733.79,450.99 L733.31,450.32 L732.55,449.75 L731.56,449.31 L730.41,449.04 L729.17,448.94 L727.94,449.04 L726.79,449.31 L725.80,449.75 L725.04,450.32 L724.56,450.99 L724.40,451.70 L724.56,452.41 L725.04,453.08 L725.80,453.65 L726.79,454.09 L727.94,454.36 L729.17,454.46 L730.41,454.36 L731.56,454.09ZM728.48,385.60 L729.24,385.03 L729.72,384.36 L729.88,383.65 L729.72,382.94 L729.24,382.27 L728.48,381.70 L727.49,381.26 L726.34,380.99 L725.10,380.89 L723.87,380.99 L722.72,381.26 L721.73,381.70 L720.97,382.27 L720.49,382.94 L720.33,383.65 L720.49,384.36 L720.97,385.03 L721.73,385.60 L722.72,386.04 L723.87,386.31 L725.10,386.41 L726.34,386.31 L727.49,386.04ZM675.31,416.30 L676.07,415.73 L676.54,415.06 L676.71,414.35 L676.54,413.64 L676.07,412.97 L675.31,412.40 L674.32,411.96 L673.17,411.69 L671.93,411.59 L670.69,411.69 L669.54,411.96 L668.55,412.40 L667.79,412.97 L667.32,413.64 L667.15,414.35 L667.32,415.06 L667.79,415.73 L668.55,416.30 L669.54,416.74 L670.69,417.01 L671.93,417.11 L673.17,417.01 L674.32,416.74ZM742.68,402.30 L718.09,388.10 L715.41,386.75 L712.46,385.61 L709.27,384.70 L705.90,384.04 L702.41,383.64 L698.86,383.50 L695.31,383.64 L691.83,384.04 L688.46,384.70 L685.27,385.61 L682.31,386.75 L679.64,388.10 L677.29,389.64 L675.32,391.35 L673.74,393.19 L672.60,395.14 L671.91,397.15 L671.67,399.20 L671.91,401.25 L672.60,403.26 L673.74,405.21 L675.32,407.05 L677.29,408.76 L679.64,410.30 L704.23,424.50 L708.48,422.05 L683.88,407.85 L681.72,406.39 L679.98,404.75 L678.71,402.98 L677.94,401.11 L677.67,399.20 L677.94,397.29 L678.71,395.42 L679.98,393.65 L681.72,392.01 L683.88,390.55 L686.41,389.30 L689.24,388.30 L692.32,387.57 L695.55,387.12 L698.86,386.97 L702.18,387.12 L705.41,387.57 L708.48,388.30 L711.32,389.30 L713.84,390.55 L738.44,404.75ZM557.01,339.40 L556.63,339.65 L556.33,339.94 L556.11,340.24 L555.98,340.57 L555.93,340.90 L555.98,341.23 L556.11,341.56 L556.33,341.86 L556.63,342.15 L557.01,342.40 L606.72,371.10 L607.16,371.32 L607.65,371.49 L608.18,371.62 L608.74,371.70 L609.32,371.72 L609.89,371.70 L610.45,371.62 L610.98,371.49 L611.48,371.32 L611.91,371.10 L650.02,349.10 L650.39,348.85 L650.69,348.56 L650.92,348.26 L651.05,347.93 L651.10,347.60 L651.05,347.27 L650.92,346.94 L650.69,346.64 L650.39,346.35 L650.02,346.10 L600.31,317.40 L599.87,317.18 L599.38,317.01 L598.85,316.88 L598.29,316.80 L597.71,316.78 L597.14,316.80 L596.58,316.88 L596.04,317.01 L595.55,317.18 L595.11,317.40Z"/>
<g font-family="Liberation Sans" font-weight="bold" font-size="4.6">
<text x="224.6" y="493.9" fill="#5c5cf0">Z</text>
<text x="213.8" y="500.3" fill="#7ee87e">Y</text>
<text x="234.8" y="500.3" fill="#f07a66">X</text>
</g>
<path d="M225.6 505v-6" stroke="#4f6cf0" stroke-width="0.9"/>
<path d="M224.3 500.2l1.3-3.4l1.3 3.4z" fill="#2f4f9a"/>
<path d="M218.3 501.6l3.2-0.6l3.6 3.6l-2.6-0.2z" fill="#1f9a2a"/>
<path d="M220 502.4l4.6 2.3" stroke="#3ddc4a" stroke-width="0.8"/>
<path d="M233 500.8l-3.4 0.4l-3.6 3.6l2.8-0.5z" fill="#9a1a1a"/>
<path d="M231 502l-4.6 2.6" stroke="#f06a5a" stroke-width="0.7"/>

</svg>
</div>
<div id="status"></div>
<div class="a" style="left:0;top:553px;width:1023px;height:2px;background:#fefefe"></div>
<div class="a" style="left:0;top:553.3px;width:26px;height:1.7px;background:#1a1a1a"></div>
<div class="a" style="left:208.6px;top:553.3px;width:814.4px;height:1.7px;background:#1c1c1c"></div>
<div class="a" style="left:627px;top:553.3px;width:25.5px;height:1.7px;background:#d9772e"></div>
<div class="a" style="left:1.9px;top:545.4px;font-size:7px;color:#3584d8;text-decoration:underline;text-underline-offset:0.4px;transform:scaleX(.93);transform-origin:0 0">www.ironcad.com</div>
<div class="a" style="left:531.3px;top:544.6px;font-size:6.8px;color:#555;transform:scaleX(.87);transform-origin:0 0">View size: 1536 x&nbsp; 804</div>
<div class="a" style="left:611.8px;top:544.6px;font-size:6.8px;color:#333;font-weight:bold;transform:scaleX(.87);transform-origin:0 0">Units:</div>
<div class="a" style="left:635px;top:544.6px;font-size:6.8px;color:#444;transform:scaleX(.89);transform-origin:0 0">mm, deg</div>
<div class="a" style="left:813.2px;top:543.2px;width:12px;height:9.8px;background:#d3d3d3"></div>
<div class="a" style="left:837.9px;top:543.4px;width:74.4px;height:9.6px;background:#fff;border:0.6px solid #d0d0d0"></div>
<div class="a" style="left:913.3px;top:543.4px;width:95.2px;height:9.6px;background:#fff;border:0.6px solid #d0d0d0"></div>
<div class="a" style="left:839.4px;top:544.6px;font-size:7px;color:#333;transform:scaleX(.89);transform-origin:0 0">Any</div>
<div class="a" style="left:914.8px;top:544.6px;font-size:7px;color:#333;transform:scaleX(.89);transform-origin:0 0">Flat pattern</div>
<svg style="left:0;top:538px" width="1023" height="17" viewBox="0 538 1023 17">
<!-- units icon -->
<path d="M603.2 545.8h1.6" stroke="#d8a520" stroke-width="0.8"/>
<rect x="605.6" y="544.2" width="2.9" height="7.2" fill="#f0c83a" stroke="#9a7a20" stroke-width="0.4"/>
<!-- zoom icons -->
<g stroke="#7a8894" stroke-width="0.8" fill="#eef2f5">
<circle cx="670.6" cy="546.9" r="2.4"/><circle cx="683" cy="546.9" r="2.4"/>
</g>
<path d="M672.4 548.8l2.8 2.6M684.8 548.8l2.8 2.6" stroke="#555" stroke-width="1"/>
<g fill="#333">
<path d="M692.6 547.6h2l-1 1.2z M711.8 547.6h2l-1 1.2z M730.8 547.6h2l-1 1.2z M749.5 547.6h2l-1 1.2z M778.8 547.6h2l-1 1.2z M795.8 547.6h2l-1 1.2z"/>
</g>
<!-- yellow cube -->
<path d="M699 546l1.5-1.5h5.2v5.6l-1.5 1.5h-5.2z" fill="#f2cc1c" stroke="#8a6a18" stroke-width="0.4"/>
<path d="M705.7 545.5l1.8 1.6l-1.8 1.6" fill="#e05a3a"/>
<!-- blue cube -->
<path d="M717.4 546.2l2-1.8h6.4v6.4l-2 1.6h-6.4z" fill="#3f86d8" stroke="#24508a" stroke-width="0.5"/>
<path d="M717.4 546.2h6.4l2-1.8M723.8 546.2v6.2" stroke="#9cc4f0" stroke-width="0.5" fill="none"/>
<!-- axis icon -->
<path d="M741 544.2v6.5M737.8 547.6h5" stroke="#3c7fd0" stroke-width="0.8"/>
<rect x="741.4" y="548.2" width="3.8" height="3.6" fill="#444"/>
<!-- slab -->
<path d="M755.2 550.5l3-5.6h4.8l-2.8 6.2l-4.8 0.2z" fill="#6d9ed8" stroke="#2f5a90" stroke-width="0.5"/>
<!-- 6v icon -->
<path d="M768 549.5q1-4 2.6-4.2M770.4 549.6l1.4-3l1.6 2.8l2.4-4.6" stroke="#8a9aab" stroke-width="0.7" fill="none"/>
<!-- blue cube 2 -->
<path d="M784.2 546.6l2.2-2h6.4v6.6l-2.2 2h-6.4z" fill="#2f7ad6" stroke="#1c4a85" stroke-width="0.5"/>
<path d="M784.2 546.6h6.4l2.2-2M790.6 546.6v6.4" stroke="#9cc4f0" stroke-width="0.5" fill="none"/>
<!-- hand -->
<path d="M803 546.5l2.6-1.6l2.6 1.8l1.2 2.8l-2.4 1.6l-2.6-1.4z" fill="#d8d8d8" stroke="#bbb" stroke-width="0.5"/>
<!-- select cursor -->
<path d="M817.5 544.2v6.8l1.8-1.6l1.4 2.4l0.9-0.5l-1.3-2.3h2.3z" fill="#f8f8f8" stroke="#555" stroke-width="0.5"/>
<rect x="827.6" y="544.4" width="5" height="5" fill="none" stroke="#bbb" stroke-width="0.5"/>
<path d="M830.5 547v5.6l1.5-1.3l1.2 2l0.7-0.4l-1.1-1.9h1.9z" fill="#f8f8f8" stroke="#555" stroke-width="0.45"/>
<!-- combo arrows -->
<path d="M908.3 547.6h2l-1 1.2z M1004.6 547.6h2l-1 1.2z" fill="#666"/>
<!-- tree icon -->
<rect x="1014" y="544" width="3" height="2.6" fill="#d43a2a"/>
<rect x="1011.6" y="549" width="3" height="2.6" fill="#3f7fd0"/>
<rect x="1016.4" y="549" width="3" height="2.6" fill="#3f7fd0"/>
<path d="M1015.5 546.6v1.4M1013 548h5v1" stroke="#555" stroke-width="0.4" fill="none"/>
</svg>

</body></html>
